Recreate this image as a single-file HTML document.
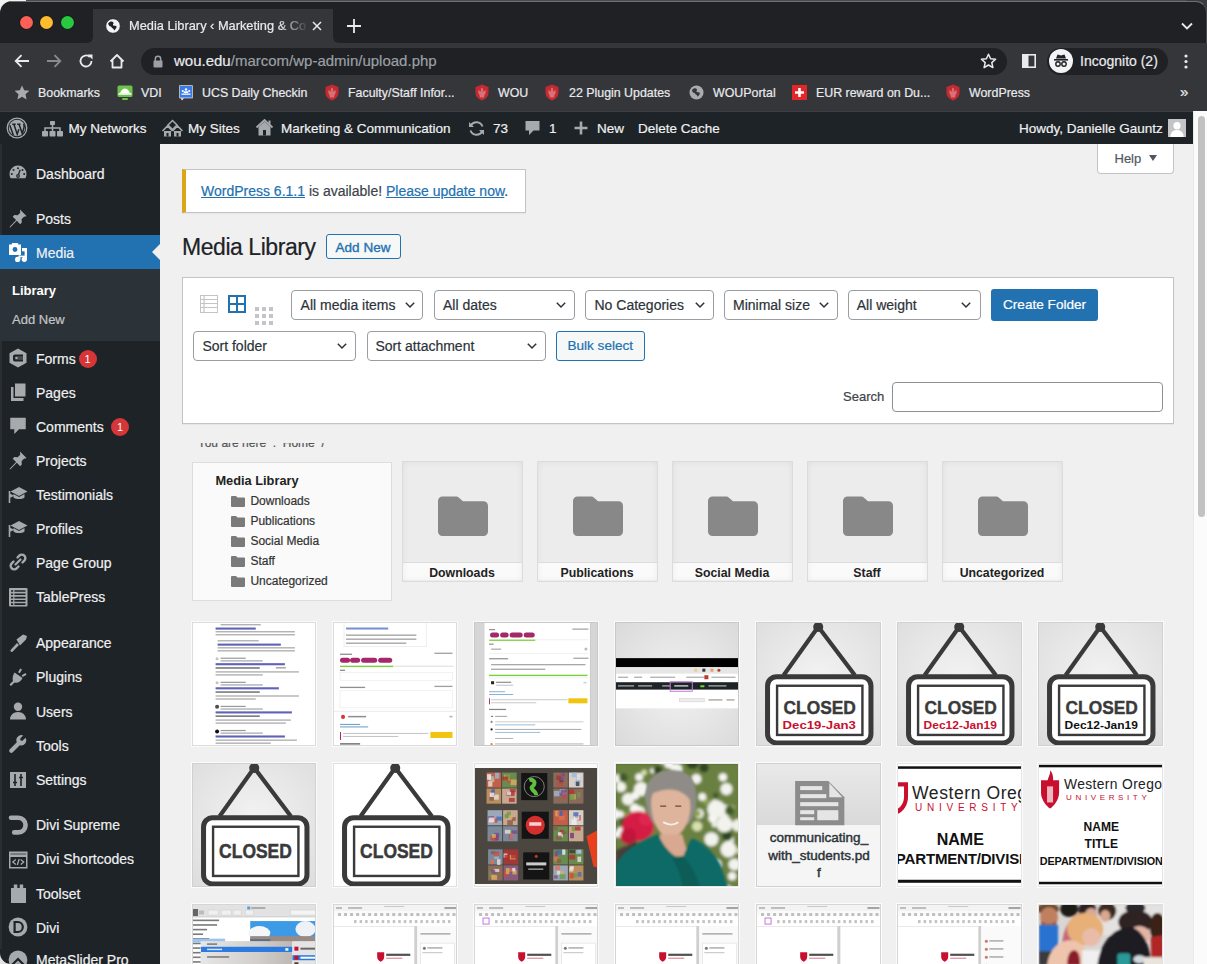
<!DOCTYPE html>
<html><head><meta charset="utf-8">
<style>
*{box-sizing:border-box;margin:0;padding:0}
html,body{width:1207px;height:964px;overflow:hidden;background:#f0f0f1;font-family:"Liberation Sans",sans-serif}
.a{position:absolute}
.t{position:absolute;white-space:nowrap;line-height:1;-webkit-text-stroke:.2px currentColor}
svg{position:absolute;overflow:visible}
#chrome{left:0;top:0;width:1207px;height:111px;background:#35363a}
#tabstrip{left:0;top:0;width:1207px;height:41px;background:#202124}
.tl{width:13px;height:13px;border-radius:50%;top:15.6px;box-shadow:0 0 0 .6px rgba(0,0,0,.35)}
#tab{left:93px;top:9px;width:240px;height:34px;background:#35363a;border-radius:9px 9px 0 0}
.w{color:#e8eaed}
.bm{font-size:12.4px;color:#e8eaed}
#adminbar{left:0;top:111px;width:1194px;height:33px;background:#1d2327;border-top:1px solid #3c3f44}
.ab{font-size:13.5px;color:#f0f0f1}
#sidebar{left:0;top:144px;width:160px;height:820px;background:#1d2327;border-bottom-left-radius:11px}
#submenu{left:0;top:269px;width:160px;height:72px;background:#2c3338}
#mediaact{left:0;top:235px;width:160px;height:34px;background:#2271b1}
.sm{font-size:14px;color:#f0f0f1}
.ic{fill:#a7aaad}
#content{left:160px;top:144px;width:1033px;height:820px;background:#f0f0f1}
#scroll{left:1193px;top:111px;width:14px;height:853px;background:#fbfbfb;border-left:1px solid #e8e8e8}
#thumb{left:1198px;top:116px;width:7px;height:401px;background:#c2c2c2;border-radius:4px}
.badge{position:absolute;width:18px;height:18px;border-radius:9px;background:#d63638;color:#fff;font-size:11px;line-height:18px;text-align:center}
.sel{height:30px;background:#fff;border:1px solid #9a9da1;border-radius:4px}
.card{position:absolute;border:1px solid #dcdcde;overflow:hidden;box-shadow:0 0 0 1px rgba(255,255,255,.7)}
.card svg{position:absolute}
.fcard{width:121px;height:120.5px;border:1px solid #dcdcde;background:linear-gradient(#fafafa,#fafafa) bottom/100% 17.5px no-repeat,#ececec;box-shadow:inset 0 0 6px rgba(0,0,0,.06)}
.fcard:after{content:"";position:absolute;left:0;right:0;bottom:17.5px;height:1px;background:#dcdcde}
</style></head><body>

<div class="a" id="chrome"></div>
<div class="a" style="left:0;top:0;width:93px;height:42.5px;background:#202124;border-bottom-right-radius:6px"></div>
<div class="a" style="left:333px;top:0;width:874px;height:42.5px;background:#202124;border-bottom-left-radius:6px"></div>
<div class="a" style="left:80px;top:0;width:260px;height:9px;background:#202124"></div>
<div class="a" style="left:0;top:0;width:30px;height:30px;background:#f2f2f2"></div>
<div class="a" style="left:0;top:1px;width:40px;height:41.5px;background:#202124;border-top-left-radius:12px"></div>
<div class="a" style="left:26px;top:0;width:1181px;height:1px;background:#4a4b4e"></div>
<div class="a" style="left:10px;top:1px;width:1187px;height:1px;background:#6f7073"></div>
<div class="a" style="left:1187px;top:0;width:20px;height:20px;background:#3a3b3e"></div>
<div class="a" style="left:1157px;top:1px;width:50px;height:41.5px;background:#202124;border-top:1px solid #6f7073;border-right:1px solid #4a4b4e;border-top-right-radius:11px"></div>
<div class="a tl" style="left:20.4px;background:#fe5f57"></div>
<div class="a tl" style="left:40.4px;background:#febc2e"></div>
<div class="a tl" style="left:60.6px;background:#28c840"></div>
<div class="a" id="tab"></div>
<!-- globe -->
<svg style="left:105px;top:18px" width="16" height="16" viewBox="0 0 16 16"><circle cx="8" cy="8" r="7.3" fill="#f1f3f4"/><path d="M3.2 5.5C4.5 3.5 7 3 8.2 4.2S7 6.8 8.5 7.5 11 7 11.5 8.5 10 11 9.5 12.5L8 10.5C6.5 10 6.8 8.8 5.5 8.5S3.5 7 3.2 5.5Z" fill="#202124"/><circle cx="8" cy="8" r="7.3" fill="none" stroke="#202124" stroke-width=".8"/></svg>
<div class="t w" style="left:129px;top:20.2px;font-size:12.8px;width:180px;overflow:hidden;-webkit-mask-image:linear-gradient(90deg,#000 150px,transparent 180px)">Media Library ‹ Marketing &amp; Co</div>
<svg style="left:312px;top:21px" width="10" height="10" viewBox="0 0 10 10"><path d="M1 1L9 9M9 1L1 9" stroke="#e8eaed" stroke-width="1.5"/></svg>
<svg style="left:347px;top:19px" width="14" height="14" viewBox="0 0 14 14"><path d="M7 0V14M0 7H14" stroke="#e8eaed" stroke-width="1.8"/></svg>
<svg style="left:1181px;top:22px" width="12" height="8" viewBox="0 0 12 8"><path d="M1 1.5L6 6.5L11 1.5" stroke="#e8eaed" stroke-width="1.8" fill="none"/></svg>
<!-- toolbar -->
<svg style="left:14px;top:54px" width="16" height="14" viewBox="0 0 16 14"><path d="M15 7H2M7.5 1.2L1.7 7L7.5 12.8" stroke="#e8eaed" stroke-width="1.8" fill="none"/></svg>
<svg style="left:46px;top:54px" width="16" height="14" viewBox="0 0 16 14"><path d="M1 7H14M8.5 1.2L14.3 7L8.5 12.8" stroke="#8a8b8e" stroke-width="1.8" fill="none"/></svg>
<svg style="left:78px;top:53px" width="16" height="16" viewBox="0 0 16 16"><path d="M13.5 8A5.5 5.5 0 1 1 11.8 4" stroke="#e8eaed" stroke-width="1.8" fill="none"/><path d="M9.5 1.5H14.5V6.5Z" fill="#e8eaed"/></svg>
<svg style="left:109px;top:53px" width="16" height="16" viewBox="0 0 16 16"><path d="M1.5 8.5L8 2L14.5 8.5M3.5 7V14.5H12.5V7" stroke="#e8eaed" stroke-width="1.8" fill="none" stroke-linejoin="round"/></svg>
<div class="a" style="left:141px;top:48px;width:866px;height:27px;border-radius:14px;background:#202124"></div>
<svg style="left:153px;top:55px" width="10" height="13" viewBox="0 0 10 13"><path d="M2.3 6V4a2.7 2.7 0 0 1 5.4 0v2" stroke="#9aa0a6" stroke-width="1.5" fill="none"/><rect x="0.5" y="5.5" width="9" height="7" rx="1" fill="#9aa0a6"/></svg>
<div class="t" style="left:174px;top:52.5px;font-size:15px;color:#e8eaed">wou.edu<span style="color:#9aa0a6">/marcom/wp-admin/upload.php</span></div>
<svg style="left:980px;top:53px" width="17" height="16" viewBox="0 0 17 16"><path d="M8.5 1.2L10.6 5.8L15.6 6.3L11.8 9.6L12.9 14.6L8.5 12L4.1 14.6L5.2 9.6L1.4 6.3L6.4 5.8Z" stroke="#e8eaed" stroke-width="1.5" fill="none" stroke-linejoin="round"/></svg>
<svg style="left:1022px;top:54px" width="14" height="14" viewBox="0 0 14 14"><rect x="0.8" y="0.8" width="12.4" height="12.4" stroke="#e8eaed" stroke-width="1.6" fill="none"/><rect x="1" y="1" width="5.5" height="12" fill="#e8eaed"/></svg>
<div class="a" style="left:1047px;top:48px;width:121px;height:27px;border-radius:14px;background:#202124"></div>
<div class="a" style="left:1049px;top:49px;width:24px;height:24px;border-radius:12px;background:#f1f3f4"></div>
<svg style="left:1053px;top:53px" width="16" height="16" viewBox="0 0 16 16"><path d="M3 5.5L4.5 1.5L8 2.5L11.5 1.5L13 5.5Z" fill="#202124"/><rect x="1" y="6" width="14" height="1.6" fill="#202124"/><circle cx="5" cy="11" r="2.2" stroke="#202124" stroke-width="1.4" fill="none"/><circle cx="11" cy="11" r="2.2" stroke="#202124" stroke-width="1.4" fill="none"/></svg>
<div class="t" style="left:1080px;top:54px;font-size:14px;color:#e8eaed">Incognito (2)</div>
<svg style="left:1184px;top:54px" width="4" height="15" viewBox="0 0 4 15"><circle cx="2" cy="2" r="1.6" fill="#e8eaed"/><circle cx="2" cy="7.5" r="1.6" fill="#e8eaed"/><circle cx="2" cy="13" r="1.6" fill="#e8eaed"/></svg>
<!-- bookmarks -->
<svg style="left:14px;top:85px" width="16" height="15" viewBox="0 0 16 15"><path d="M8 0.5L10.2 5.3L15.4 5.8L11.5 9.3L12.6 14.4L8 11.7L3.4 14.4L4.5 9.3L0.6 5.8L5.8 5.3Z" fill="#a8abaf"/></svg>
<div class="t bm" style="left:38px;top:87px">Bookmarks</div>
<svg style="left:117px;top:85px" width="16" height="16" viewBox="0 0 16 16"><rect x="0.5" y="0.5" width="15" height="11.5" rx="1.5" fill="#6cc24a"/><path d="M2 9.5L4.5 5.5C5.5 4.2 6.5 3.5 8 3.5S10.5 4.2 11.5 5.5L14 9.5Z" fill="#fff"/><rect x="1.5" y="8" width="13" height="1.8" fill="#e8f5e0"/><rect x="5" y="13" width="6" height="2" rx="1" fill="#6cc24a"/></svg>
<div class="t bm" style="left:141px;top:87px">VDI</div>
<svg style="left:179px;top:85px" width="14" height="16" viewBox="0 0 14 16"><rect x="0.3" y="0.3" width="13.4" height="13" fill="#e8eaed"/><rect x="1" y="1" width="12" height="11.6" fill="#3b7be8"/><path d="M1.5 13.3L3 15.5L5 13.3Z" fill="#e8eaed"/><circle cx="7" cy="4.5" r="1.3" fill="#fff"/><circle cx="3.8" cy="6" r="1.1" fill="#fff"/><circle cx="10.2" cy="6" r="1.1" fill="#fff"/><path d="M2.5 8.5H11.5V9.8H2.5Z" fill="#fff"/><path d="M5.2 6.2H8.8L9.5 8H4.5Z" fill="#fff"/></svg>
<div class="t bm" style="left:202px;top:87px">UCS Daily Checkin</div>
<svg style="left:325px;top:84px" width="14" height="17" viewBox="0 0 14 17"><path d="M7 0.5L13.5 3V9C13.5 12.5 10.5 15 7 16.5C3.5 15 0.5 12.5 0.5 9V3Z" fill="#c42a32"/><path d="M7 3.5C8.5 5 8.5 6.5 7.5 7.5C9 7.5 10 6.5 10 5.5C11 7 11 9.5 9.5 11L9 13.5H5L4.5 11C3 9.5 3 7 4 5.5C4 6.5 5 7.5 6.5 7.5C5.5 6.5 5.5 5 7 3.5Z" fill="#f0c8c8" opacity=".45"/></svg>
<div class="t bm" style="left:348px;top:87px">Faculty/Staff Infor...</div>
<svg style="left:475px;top:84px" width="14" height="17" viewBox="0 0 14 17"><path d="M7 0.5L13.5 3V9C13.5 12.5 10.5 15 7 16.5C3.5 15 0.5 12.5 0.5 9V3Z" fill="#c42a32"/><path d="M7 3.5C8.5 5 8.5 6.5 7.5 7.5C9 7.5 10 6.5 10 5.5C11 7 11 9.5 9.5 11L9 13.5H5L4.5 11C3 9.5 3 7 4 5.5C4 6.5 5 7.5 6.5 7.5C5.5 6.5 5.5 5 7 3.5Z" fill="#f0c8c8" opacity=".45"/></svg>
<div class="t bm" style="left:498px;top:87px">WOU</div>
<svg style="left:545px;top:84px" width="14" height="17" viewBox="0 0 14 17"><path d="M7 0.5L13.5 3V9C13.5 12.5 10.5 15 7 16.5C3.5 15 0.5 12.5 0.5 9V3Z" fill="#c42a32"/><path d="M7 3.5C8.5 5 8.5 6.5 7.5 7.5C9 7.5 10 6.5 10 5.5C11 7 11 9.5 9.5 11L9 13.5H5L4.5 11C3 9.5 3 7 4 5.5C4 6.5 5 7.5 6.5 7.5C5.5 6.5 5.5 5 7 3.5Z" fill="#f0c8c8" opacity=".45"/></svg>
<div class="t bm" style="left:569px;top:87px">22 Plugin Updates</div>
<svg style="left:689px;top:85px" width="15" height="15" viewBox="0 0 16 16"><circle cx="8" cy="8" r="7.5" fill="#a8abaf"/><path d="M3.2 5.5C4.5 3.5 7 3 8.2 4.2S7 6.8 8.5 7.5 11 7 11.5 8.5 10 11 9.5 12.5L8 10.5C6.5 10 6.8 8.8 5.5 8.5S3.5 7 3.2 5.5Z" fill="#35363a"/></svg>
<div class="t bm" style="left:713px;top:87px">WOUPortal</div>
<div class="a" style="left:792px;top:85px;width:15px;height:15px;background:#e3262a"></div>
<svg style="left:792px;top:85px" width="15" height="15" viewBox="0 0 15 15"><path d="M7.5 3V12M3 7.5H12" stroke="#fff" stroke-width="2.6"/></svg>
<div class="t bm" style="left:816px;top:87px">EUR reward on Du...</div>
<svg style="left:946px;top:84px" width="14" height="17" viewBox="0 0 14 17"><path d="M7 0.5L13.5 3V9C13.5 12.5 10.5 15 7 16.5C3.5 15 0.5 12.5 0.5 9V3Z" fill="#c42a32"/><path d="M7 3.5C8.5 5 8.5 6.5 7.5 7.5C9 7.5 10 6.5 10 5.5C11 7 11 9.5 9.5 11L9 13.5H5L4.5 11C3 9.5 3 7 4 5.5C4 6.5 5 7.5 6.5 7.5C5.5 6.5 5.5 5 7 3.5Z" fill="#f0c8c8" opacity=".45"/></svg>
<div class="t bm" style="left:969px;top:87px">WordPress</div>
<div class="t" style="left:1180px;top:84px;font-size:15px;color:#e8eaed">»</div>

<div class="a" id="adminbar"></div>
<svg style="left:6px;top:117px" width="22" height="22" viewBox="0 0 22 22"><circle cx="11" cy="11" r="9.8" fill="none" stroke="#a7aaad" stroke-width="1.3"/><circle cx="11" cy="11" r="8.2" fill="#a7aaad"/><path d="M3.8 8.2l3.6 10M6.2 7.2h3.5M11.2 7.2h3.3M7.9 7.2l3.3 10 1.7-5M13 7.2l3.3 9.3 1.6-5.5c.5-1.8.2-3.2-.4-4" stroke="#1d2327" stroke-width="1.5" fill="none"/></svg>
<svg style="left:42px;top:121px" width="21" height="16" viewBox="0 0 21 16"><rect x="8" y="0" width="5" height="4" rx=".8" fill="#a7aaad"/><path d="M10.5 4v3M3 10V7h15v3M10.5 7v3" stroke="#a7aaad" stroke-width="1.5" fill="none"/><rect x="0" y="10" width="6" height="5.5" rx=".8" fill="#a7aaad"/><rect x="7.5" y="10" width="6" height="5.5" rx=".8" fill="#a7aaad"/><rect x="15" y="10" width="6" height="5.5" rx=".8" fill="#a7aaad"/></svg>
<div class="t ab" style="left:68.5px;top:122px">My Networks</div>
<svg style="left:162px;top:120px" width="21" height="17" viewBox="0 0 21 17"><path d="M10.5 0.5L15 5 10.5 9.5 6 5z" fill="none" stroke="#a7aaad" stroke-width="1.5"/><path d="M0.5 11l5-5 5 5M10.5 11l5-5 5 5" stroke="#a7aaad" stroke-width="1.6" fill="none"/><path d="M2 11h7v5.5H2zM12 11h7v5.5h-7z" fill="#a7aaad"/><rect x="4.5" y="13" width="2" height="3.5" fill="#1d2327"/><rect x="14.5" y="13" width="2" height="3.5" fill="#1d2327"/></svg>
<div class="t ab" style="left:188px;top:122px">My Sites</div>
<svg style="left:256px;top:119px" width="17" height="17" viewBox="0 0 17 17"><path d="M0.5 8.5L8.5 1l8 7.5" stroke="#a7aaad" stroke-width="1.8" fill="none"/><path d="M2.5 8v8.5h12V8L8.5 2.5z" fill="#a7aaad"/><rect x="7" y="11" width="3" height="5.5" fill="#1d2327"/><rect x="12.5" y="1.5" width="2" height="4" fill="#a7aaad"/></svg>
<div class="t ab" style="left:281px;top:122px">Marketing &amp; Communication</div>
<svg style="left:468px;top:120px" width="17" height="17" viewBox="0 0 17 17"><path d="M14.5 6.5A6.5 6.5 0 0 0 2.8 5.5M2.5 10.5a6.5 6.5 0 0 0 11.7 1" stroke="#a7aaad" stroke-width="2" fill="none"/><path d="M1 2v5h5zM16 15v-5h-5z" fill="#a7aaad"/></svg>
<div class="t ab" style="left:493px;top:122px">73</div>
<svg style="left:525px;top:120px" width="15" height="16" viewBox="0 0 15 16"><path d="M0.5 1h14v9.5h-6L4 15v-4.5H0.5z" fill="#a7aaad"/></svg>
<div class="t ab" style="left:549px;top:122px">1</div>
<svg style="left:574px;top:121px" width="14" height="14" viewBox="0 0 14 14"><path d="M7 0.5v13M0.5 7h13" stroke="#a7aaad" stroke-width="2.6"/></svg>
<div class="t ab" style="left:597px;top:122px">New</div>
<div class="t ab" style="left:638px;top:122px">Delete Cache</div>
<div class="t ab" style="left:1019px;top:122px">Howdy, Danielle Gauntz</div>
<div class="a" style="left:1168px;top:118.5px;width:18px;height:18px;background:#c3c4c7;overflow:hidden"><svg style="left:0;top:0" width="18" height="18" viewBox="0 0 19 19"><circle cx="9.5" cy="7" r="3.8" fill="#fff"/><path d="M2.5 19c0-5 3-7.5 7-7.5s7 2.5 7 7.5z" fill="#fff"/></svg></div>

<div class="a" style="left:0;top:940px;width:20px;height:24px;background:#e4e4e4"></div>
<div class="a" id="sidebar"></div>
<div class="a" style="left:0;top:144px;width:1.5px;height:805px;background:#2a2e33"></div>
<div class="a" id="mediaact"></div>
<div class="a" id="submenu"></div>
<svg style="left:150px;top:244px" width="10" height="16" viewBox="0 0 10 16"><path d="M10 0V16L2 8Z" fill="#f0f0f1"/></svg>
<div class="t" style="left:12px;top:284px;font-size:13px;font-weight:700;color:#fff;-webkit-text-stroke:0">Library</div>
<div class="t" style="left:12px;top:312.5px;font-size:13px;color:#c3c4c7">Add New</div>
<div class="badge" style="left:78.5px;top:350px">1</div>
<div class="badge" style="left:111px;top:418px">1</div>

<svg style="left:8px;top:163px" width="20" height="20" viewBox="0 0 20 20"><path d="M10 2.5A8.5 8.5 0 0 0 1.5 11c0 1.6.4 3 1.1 4.3h14.8c.7-1.3 1.1-2.7 1.1-4.3A8.5 8.5 0 0 0 10 2.5z" fill="#a7aaad"/><circle cx="10" cy="5.2" r="1" fill="#1d2327"/><circle cx="5.5" cy="7" r="1" fill="#1d2327"/><circle cx="14.5" cy="7" r="1" fill="#1d2327"/><circle cx="3.8" cy="11" r="1" fill="#1d2327"/><circle cx="16.2" cy="11" r="1" fill="#1d2327"/><path d="M12.2 6.8L10.4 11.8" stroke="#1d2327" stroke-width="1.3"/><circle cx="10" cy="13" r="1.9" fill="#1d2327"/><circle cx="10" cy="13" r=".7" fill="#a7aaad"/></svg>
<div class="t sm" style="left:36px;top:166.7px">Dashboard</div>
<svg style="left:8px;top:208px" width="20" height="20" viewBox="0 0 20 20"><path d="M12 1.5l6.5 6.5-1.5.8-.8-.2-2.6 2.6.2 3.4-1.6 1.6-3.4-3.4L2.2 19.5 1.5 19l6.6-6.9-3.4-3.4L6.3 7.1l3.4.2 2.6-2.6-.2-.8z" fill="#a7aaad"/></svg>
<div class="t sm" style="left:36px;top:211.7px">Posts</div>
<svg style="left:8px;top:242px" width="20" height="20" viewBox="0 0 20 20"><path d="M1 2.5h2.5l.8-1.5h5.4l.8 1.5H13v10.5H1z" fill="#fff"/><circle cx="7" cy="7.5" r="2.4" fill="#2271b1"/><path d="M14 6h5v3.3h-5z" fill="#fff"/><rect x="16.6" y="6" width="2.4" height="11.5" fill="#fff"/><circle cx="16.3" cy="17.3" r="2.6" fill="#fff"/><rect x="10.6" y="13.6" width="1.8" height="4" fill="#fff"/><rect x="10.6" y="13.6" width="8.4" height="1.6" fill="#fff"/><circle cx="9.6" cy="17.4" r="2.6" fill="#fff"/></svg>
<div class="t sm" style="left:36px;top:245.7px">Media</div>
<svg style="left:8px;top:348px" width="20" height="20" viewBox="0 0 20 20"><path d="M10 0.5l8.5 4.8v9.4L10 19.5l-8.5-4.8V5.3z" fill="#a7aaad"/><path d="M5 8.3a1.8 1.8 0 0 1 1.8-1.8H15v2.2H7.3v2.6H15v2.2H6.8A1.8 1.8 0 0 1 5 11.7z" fill="#1d2327"/><rect x="9.5" y="9.3" width="5.5" height="1.4" fill="#1d2327"/></svg>
<div class="t sm" style="left:36px;top:351.6px">Forms</div>
<svg style="left:8px;top:382px" width="20" height="20" viewBox="0 0 20 20"><path d="M7 1.5h10.5v13H7z" fill="#a7aaad"/><path d="M3 5h2.5v11h10v3H3z" fill="#a7aaad"/></svg>
<div class="t sm" style="left:36px;top:385.6px">Pages</div>
<svg style="left:8px;top:416px" width="20" height="20" viewBox="0 0 20 20"><path d="M2.5 2h15v11h-6.5l-4.5 4.5V13H2.5z" fill="#a7aaad" stroke="#a7aaad" stroke-width=".5" stroke-linejoin="round"/></svg>
<div class="t sm" style="left:36px;top:419.6px">Comments</div>
<svg style="left:8px;top:450px" width="20" height="20" viewBox="0 0 20 20"><path d="M12 1.5l6.5 6.5-1.5.8-.8-.2-2.6 2.6.2 3.4-1.6 1.6-3.4-3.4L2.2 19.5 1.5 19l6.6-6.9-3.4-3.4L6.3 7.1l3.4.2 2.6-2.6-.2-.8z" fill="#a7aaad"/></svg>
<div class="t sm" style="left:36px;top:453.6px">Projects</div>
<svg style="left:8px;top:484px" width="20" height="20" viewBox="0 0 20 20"><path d="M11 3l8.5 4.5L11 12 2.5 7.5z" fill="#a7aaad"/><path d="M5.5 10v3.5c2.5 2 8.5 2 11 0V10L11 13z" fill="#a7aaad"/><path d="M1.5 7v12" stroke="#a7aaad" stroke-width="1.6"/><path d="M1.5 9.5l5 2.2-5 2.2z" fill="#a7aaad"/></svg>
<div class="t sm" style="left:36px;top:487.6px">Testimonials</div>
<svg style="left:8px;top:518px" width="20" height="20" viewBox="0 0 20 20"><path d="M11 3l8.5 4.5L11 12 2.5 7.5z" fill="#a7aaad"/><path d="M5.5 10v3.5c2.5 2 8.5 2 11 0V10L11 13z" fill="#a7aaad"/><path d="M1.5 7v12" stroke="#a7aaad" stroke-width="1.6"/><path d="M1.5 9.5l5 2.2-5 2.2z" fill="#a7aaad"/></svg>
<div class="t sm" style="left:36px;top:521.6px">Profiles</div>
<svg style="left:8px;top:552px" width="20" height="20" viewBox="0 0 20 20"><path d="M7.5 12.5l5-5" stroke="#a7aaad" stroke-width="2.2" stroke-linecap="round"/><path d="M9.5 5.5l1.8-1.8a3.5 3.5 0 0 1 5 5L14.5 10.5M10.5 14.5l-1.8 1.8a3.5 3.5 0 0 1-5-5L5.5 9.5" stroke="#a7aaad" stroke-width="2.4" fill="none" stroke-linecap="round"/></svg>
<div class="t sm" style="left:36px;top:555.6px">Page Group</div>
<svg style="left:8px;top:586.5px" width="20" height="20" viewBox="0 0 20 20"><rect x="1" y="1" width="18.5" height="18.5" rx="1" fill="#a7aaad"/><path d="M3 4h14.5M3 7.3h14.5M3 10.6h14.5M3 13.9h14.5M3 17.1h14.5" stroke="#1d2327" stroke-width="1.6"/><path d="M5.8 2.5v16" stroke="#a7aaad" stroke-width="1.2"/></svg>
<div class="t sm" style="left:36px;top:590.1px">TablePress</div>
<svg style="left:8px;top:632.5px" width="20" height="20" viewBox="0 0 20 20"><path d="M8.5 6.5L15 1.5l4 1.5-1 3.5-6 6z" fill="#a7aaad"/><path d="M9 10l2 2-6.5 6.8c-.9.9-2.8-.9-1.9-1.8z" fill="#a7aaad"/></svg>
<div class="t sm" style="left:36px;top:636.1px">Appearance</div>
<svg style="left:8px;top:666.5px" width="20" height="20" viewBox="0 0 20 20"><path d="M12.2 1.5l1.8 1-2.2 3.8-1.8-1zM17.5 6l1 1.8-3.8 2.2-1-1.8z" fill="#a7aaad"/><path d="M6.5 5.5l8 5.5c-1.5 3.5-5 5.5-8 4.5l-3.5 3.5-1.5-1.5 3.5-3.5c-1-3 .2-6.5 1.5-8.5z" fill="#a7aaad"/></svg>
<div class="t sm" style="left:36px;top:670.1px">Plugins</div>
<svg style="left:8px;top:701px" width="20" height="20" viewBox="0 0 20 20"><circle cx="10" cy="5.8" r="4.2" fill="#a7aaad"/><path d="M2 18.5c0-4.5 3.5-7.5 8-7.5s8 3 8 7.5z" fill="#a7aaad"/></svg>
<div class="t sm" style="left:36px;top:704.6px">Users</div>
<svg style="left:8px;top:735px" width="20" height="20" viewBox="0 0 20 20"><path d="M17.5 2.8l-3 3-2-.3-.3-2 3-3A5 5 0 0 0 8.8 7.2L1.8 14.2a2.1 2.1 0 0 0 3 3l7-7a5 5 0 0 0 5.7-7.4z" fill="#a7aaad"/></svg>
<div class="t sm" style="left:36px;top:738.6px">Tools</div>
<svg style="left:8px;top:769.5px" width="20" height="20" viewBox="0 0 20 20"><rect x="2" y="2" width="16" height="16" fill="#a7aaad"/><path d="M7 4v12M5 12.5h4M13 4v12M11 7.5h4" stroke="#1d2327" stroke-width="1.6"/></svg>
<div class="t sm" style="left:36px;top:773.1px">Settings</div>
<svg style="left:8px;top:814.5px" width="20" height="20" viewBox="0 0 20 20"><path d="M3 2.8H10.3a7.3 7.3 0 0 1 0 14.6H6.2" stroke="#a7aaad" stroke-width="4.6" fill="none" stroke-linecap="round"/></svg>
<div class="t sm" style="left:36px;top:818.1px">Divi Supreme</div>
<svg style="left:8px;top:848.5px" width="20" height="20" viewBox="0 0 20 20"><rect x="1" y="2.5" width="18.5" height="17" fill="#a7aaad"/><rect x="2.5" y="8" width="15.5" height="10" fill="#1d2327"/><path d="M7.8 10.5l-3 2.5 3 2.5M12.7 10.5l3 2.5-3 2.5M11.2 10l-1.9 6" stroke="#a7aaad" stroke-width="1.3" fill="none"/><path d="M2.5 5h15.5" stroke="#1d2327" stroke-width=".7"/></svg>
<div class="t sm" style="left:36px;top:852.1px">Divi Shortcodes</div>
<svg style="left:8px;top:883px" width="20" height="20" viewBox="0 0 20 20"><path d="M3 5h2.8V1.5h3.5V5h2.4V1.5h3.5V5H18v15H3z" fill="#a7aaad"/></svg>
<div class="t sm" style="left:36px;top:886.6px">Toolset</div>
<svg style="left:8px;top:917px" width="20" height="20" viewBox="0 0 20 20"><circle cx="10" cy="10" r="9.4" fill="#a7aaad"/><path d="M6.6 5h3.2a5 5 0 0 1 0 10H6.6z" fill="none" stroke="#1d2327" stroke-width="2.2"/></svg>
<div class="t sm" style="left:36px;top:920.6px">Divi</div>
<svg style="left:8px;top:949.5px" width="20" height="20" viewBox="0 0 20 20"><circle cx="10" cy="10" r="9.4" fill="#a7aaad"/><path d="M3.5 15.5L10 9l6.5 6.5M6 19l4-4 4 4" stroke="#1d2327" stroke-width="2.2" fill="none"/></svg>
<div class="t sm" style="left:36px;top:953.1px">MetaSlider Pro</div>
<div class="a" id="content"></div>
<!-- help tab -->
<div class="a" style="left:1097px;top:144px;width:77px;height:30px;background:#fff;border:1px solid #c3c4c7;border-top:none;border-radius:0 0 4px 4px"></div>
<div class="t" style="left:1114.5px;top:152.2px;font-size:13px;color:#50575e">Help</div>
<svg style="left:1149px;top:155px" width="8" height="6" viewBox="0 0 8 6"><path d="M0 0H8L4 6Z" fill="#50575e"/></svg>
<!-- notice -->
<div class="a" style="left:182px;top:169px;width:344px;height:44px;background:#fff;border:1px solid #c3c4c7;border-left:4px solid #dba617;box-shadow:0 1px 1px rgba(0,0,0,.04)"></div>
<div class="t" style="left:201px;top:184.2px;font-size:14px;color:#3c434a"><span style="color:#2271b1;text-decoration:underline">WordPress 6.1.1</span> is available! <span style="color:#2271b1;text-decoration:underline">Please update now</span>.</div>
<!-- heading -->
<div class="t" style="left:182px;top:235.5px;font-size:23px;letter-spacing:-0.45px;color:#1d2327">Media Library</div>
<div class="a" style="left:326px;top:234px;width:75px;height:25px;border:1px solid #2271b1;border-radius:3px;background:#f6f7f7"></div>
<div class="t" style="left:335.5px;top:241px;font-size:13.5px;letter-spacing:.05px;color:#2271b1;-webkit-text-stroke:.35px #2271b1">Add New</div>
<!-- filter box -->
<div class="a" style="left:182px;top:277px;width:992px;height:147px;background:#fff;border:1px solid #c3c4c7;box-shadow:0 1px 1px rgba(0,0,0,.04)"></div>
<svg style="left:200px;top:295px" width="18" height="18" viewBox="0 0 18 18"><rect x="0.5" y="0.5" width="17" height="17" fill="none" stroke="#c3c4c7" stroke-width="1"/><path d="M0.5 4.5h17M0.5 8.5h17M0.5 12.5h17M4 0.5v17" stroke="#c3c4c7" stroke-width="1.2"/></svg>
<svg style="left:228px;top:295px" width="18" height="18" viewBox="0 0 18 18"><rect x="1" y="1" width="16" height="16" fill="none" stroke="#2271b1" stroke-width="2"/><path d="M9 1v16M1 9h16" stroke="#2271b1" stroke-width="2"/></svg>
<svg style="left:255px;top:307px" width="18" height="18" viewBox="0 0 18 18"><g fill="#c3c4c7"><rect x="0" y="0" width="4" height="4"/><rect x="7" y="0" width="4" height="4"/><rect x="14" y="0" width="4" height="4"/><rect x="0" y="7" width="4" height="4"/><rect x="7" y="7" width="4" height="4"/><rect x="14" y="7" width="4" height="4"/><rect x="0" y="14" width="4" height="4"/><rect x="7" y="14" width="4" height="4"/><rect x="14" y="14" width="4" height="4"/></g></svg>

<div class="a sel" style="left:291px;top:289.5px;width:132.0px"></div>
<div class="t" style="left:300.6px;top:297.8px;font-size:14px;color:#2c3338">All media items</div>
<svg style="left:405px;top:302.0px" width="10" height="6" viewBox="0 0 10 6"><path d="M0.8 0.8L5 5L9.2 0.8" stroke="#2c3338" stroke-width="1.5" fill="none"/></svg>
<div class="a sel" style="left:433.5px;top:289.5px;width:141.0px"></div>
<div class="t" style="left:443px;top:297.8px;font-size:14px;color:#2c3338">All dates</div>
<svg style="left:556px;top:302.0px" width="10" height="6" viewBox="0 0 10 6"><path d="M0.8 0.8L5 5L9.2 0.8" stroke="#2c3338" stroke-width="1.5" fill="none"/></svg>
<div class="a sel" style="left:585px;top:289.5px;width:129.0px"></div>
<div class="t" style="left:594.5px;top:297.8px;font-size:14px;color:#2c3338">No Categories</div>
<svg style="left:695.4px;top:302.0px" width="10" height="6" viewBox="0 0 10 6"><path d="M0.8 0.8L5 5L9.2 0.8" stroke="#2c3338" stroke-width="1.5" fill="none"/></svg>
<div class="a sel" style="left:724px;top:289.5px;width:113.5px"></div>
<div class="t" style="left:733px;top:297.8px;font-size:14px;color:#2c3338">Minimal size</div>
<svg style="left:819px;top:302.0px" width="10" height="6" viewBox="0 0 10 6"><path d="M0.8 0.8L5 5L9.2 0.8" stroke="#2c3338" stroke-width="1.5" fill="none"/></svg>
<div class="a sel" style="left:848px;top:289.5px;width:132.5px"></div>
<div class="t" style="left:856.7px;top:297.8px;font-size:14px;color:#2c3338">All weight</div>
<svg style="left:961px;top:302.0px" width="10" height="6" viewBox="0 0 10 6"><path d="M0.8 0.8L5 5L9.2 0.8" stroke="#2c3338" stroke-width="1.5" fill="none"/></svg>
<div class="a sel" style="left:193px;top:330.5px;width:163.0px"></div>
<div class="t" style="left:202.4px;top:338.8px;font-size:14px;color:#2c3338">Sort folder</div>
<svg style="left:337px;top:343.0px" width="10" height="6" viewBox="0 0 10 6"><path d="M0.8 0.8L5 5L9.2 0.8" stroke="#2c3338" stroke-width="1.5" fill="none"/></svg>
<div class="a sel" style="left:366.5px;top:330.5px;width:179.5px"></div>
<div class="t" style="left:375.5px;top:338.8px;font-size:14px;color:#2c3338">Sort attachment</div>
<svg style="left:527px;top:343.0px" width="10" height="6" viewBox="0 0 10 6"><path d="M0.8 0.8L5 5L9.2 0.8" stroke="#2c3338" stroke-width="1.5" fill="none"/></svg>
<div class="a" style="left:991px;top:288.5px;width:107px;height:32px;background:#2271b1;border-radius:3px"></div>
<div class="t" style="left:1003px;top:297.5px;font-size:13.6px;color:#fff">Create Folder</div>
<div class="a" style="left:556px;top:330.5px;width:88.5px;height:30px;background:#f6f7f7;border:1px solid #2271b1;border-radius:3px"></div>
<div class="t" style="left:567.4px;top:339px;font-size:13.6px;color:#2271b1">Bulk select</div>
<div class="t" style="left:843px;top:390.3px;font-size:13px;color:#3c434a">Search</div>
<div class="a" style="left:891.5px;top:381.5px;width:271.5px;height:30px;background:#fff;border:1px solid #8c8f94;border-radius:4px"></div>

<div class="a" style="left:195px;top:442.5px;width:200px;height:4.6px;overflow:hidden"><div class="t" style="left:2.8px;top:-6px;font-size:12px;color:#555">You are here&nbsp;&nbsp;:&nbsp;&nbsp;Home&nbsp;&nbsp;/</div></div>
<div class="a" style="left:192px;top:461.5px;width:200px;height:139.5px;background:#fafafa;border:1.5px solid #ddd"></div>
<div class="t" style="left:215.4px;top:474.7px;font-size:12.8px;font-weight:700;color:#222;-webkit-text-stroke:0">Media Library</div>
<svg style="left:230.5px;top:496.3px" width="14" height="11" viewBox="0 0 14 11"><path d="M0 1a1 1 0 0 1 1-1h4l1.5 1.5H13a1 1 0 0 1 1 1V10a1 1 0 0 1-1 1H1a1 1 0 0 1-1-1z" fill="#7a7a7a"/></svg>
<div class="t" style="left:250.4px;top:495.1px;font-size:12px;color:#333">Downloads</div>
<svg style="left:230.5px;top:516.3px" width="14" height="11" viewBox="0 0 14 11"><path d="M0 1a1 1 0 0 1 1-1h4l1.5 1.5H13a1 1 0 0 1 1 1V10a1 1 0 0 1-1 1H1a1 1 0 0 1-1-1z" fill="#7a7a7a"/></svg>
<div class="t" style="left:250.4px;top:515.1px;font-size:12px;color:#333">Publications</div>
<svg style="left:230.5px;top:536.3px" width="14" height="11" viewBox="0 0 14 11"><path d="M0 1a1 1 0 0 1 1-1h4l1.5 1.5H13a1 1 0 0 1 1 1V10a1 1 0 0 1-1 1H1a1 1 0 0 1-1-1z" fill="#7a7a7a"/></svg>
<div class="t" style="left:250.4px;top:535.1px;font-size:12px;color:#333">Social Media</div>
<svg style="left:230.5px;top:556.3px" width="14" height="11" viewBox="0 0 14 11"><path d="M0 1a1 1 0 0 1 1-1h4l1.5 1.5H13a1 1 0 0 1 1 1V10a1 1 0 0 1-1 1H1a1 1 0 0 1-1-1z" fill="#7a7a7a"/></svg>
<div class="t" style="left:250.4px;top:555.1px;font-size:12px;color:#333">Staff</div>
<svg style="left:230.5px;top:576.3px" width="14" height="11" viewBox="0 0 14 11"><path d="M0 1a1 1 0 0 1 1-1h4l1.5 1.5H13a1 1 0 0 1 1 1V10a1 1 0 0 1-1 1H1a1 1 0 0 1-1-1z" fill="#7a7a7a"/></svg>
<div class="t" style="left:250.4px;top:575.1px;font-size:12px;color:#333">Uncategorized</div>
<div class="a fcard" style="left:402px;top:461px"></div>
<svg style="left:437.5px;top:496px" width="50" height="40" viewBox="0 0 50 40"><path d="M0 5a4.5 4.5 0 0 1 4.5-4.5H18.5a3 3 0 0 1 2.2 1L25 5.3H45.5A4.5 4.5 0 0 1 50 9.8V35.5A4.5 4.5 0 0 1 45.5 40H4.5A4.5 4.5 0 0 1 0 35.5z" fill="#888"/></svg>
<div class="t" style="left:402px;width:120px;text-align:center;top:567px;font-size:12.3px;font-weight:700;color:#222;-webkit-text-stroke:0">Downloads</div>
<div class="a fcard" style="left:537px;top:461px"></div>
<svg style="left:572.5px;top:496px" width="50" height="40" viewBox="0 0 50 40"><path d="M0 5a4.5 4.5 0 0 1 4.5-4.5H18.5a3 3 0 0 1 2.2 1L25 5.3H45.5A4.5 4.5 0 0 1 50 9.8V35.5A4.5 4.5 0 0 1 45.5 40H4.5A4.5 4.5 0 0 1 0 35.5z" fill="#888"/></svg>
<div class="t" style="left:537px;width:120px;text-align:center;top:567px;font-size:12.3px;font-weight:700;color:#222;-webkit-text-stroke:0">Publications</div>
<div class="a fcard" style="left:672px;top:461px"></div>
<svg style="left:707.5px;top:496px" width="50" height="40" viewBox="0 0 50 40"><path d="M0 5a4.5 4.5 0 0 1 4.5-4.5H18.5a3 3 0 0 1 2.2 1L25 5.3H45.5A4.5 4.5 0 0 1 50 9.8V35.5A4.5 4.5 0 0 1 45.5 40H4.5A4.5 4.5 0 0 1 0 35.5z" fill="#888"/></svg>
<div class="t" style="left:672px;width:120px;text-align:center;top:567px;font-size:12.3px;font-weight:700;color:#222;-webkit-text-stroke:0">Social Media</div>
<div class="a fcard" style="left:807px;top:461px"></div>
<svg style="left:842.5px;top:496px" width="50" height="40" viewBox="0 0 50 40"><path d="M0 5a4.5 4.5 0 0 1 4.5-4.5H18.5a3 3 0 0 1 2.2 1L25 5.3H45.5A4.5 4.5 0 0 1 50 9.8V35.5A4.5 4.5 0 0 1 45.5 40H4.5A4.5 4.5 0 0 1 0 35.5z" fill="#888"/></svg>
<div class="t" style="left:807px;width:120px;text-align:center;top:567px;font-size:12.3px;font-weight:700;color:#222;-webkit-text-stroke:0">Staff</div>
<div class="a fcard" style="left:942px;top:461px"></div>
<svg style="left:977.5px;top:496px" width="50" height="40" viewBox="0 0 50 40"><path d="M0 5a4.5 4.5 0 0 1 4.5-4.5H18.5a3 3 0 0 1 2.2 1L25 5.3H45.5A4.5 4.5 0 0 1 50 9.8V35.5A4.5 4.5 0 0 1 45.5 40H4.5A4.5 4.5 0 0 1 0 35.5z" fill="#888"/></svg>
<div class="t" style="left:942px;width:120px;text-align:center;top:567px;font-size:12.3px;font-weight:700;color:#222;-webkit-text-stroke:0">Uncategorized</div>
<div class="a card" style="left:191.6px;top:621.5px;width:124.5px;height:124.5px;background:#fff;border-color:#dcdcde;"><svg style="left:0;top:0" width="124.5" height="124.5" viewBox="0 0 124 124"><rect x="27.5" y="1.0" width="40.0" height="1.4" fill="#666" opacity="0.5"/><rect x="22.5" y="4.5" width="40.0" height="2.1" fill="#2a2fa0" opacity="0.75"/><rect x="22.5" y="8.0" width="79.0" height="1.4" fill="#666" opacity="0.5"/><rect x="22.5" y="11.0" width="79.0" height="1.4" fill="#666" opacity="0.5"/><rect x="24.5" y="17.0" width="41.0" height="1.4" fill="#666" opacity="0.5"/><rect x="24.5" y="20.5" width="63.0" height="2.1" fill="#2a2fa0" opacity="0.75"/><rect x="24.5" y="24.0" width="77.0" height="1.4" fill="#666" opacity="0.5"/><rect x="24.5" y="27.0" width="77.0" height="1.4" fill="#666" opacity="0.5"/><rect x="27.5" y="34.5" width="25.0" height="1.2" fill="#333" opacity="0.5"/><rect x="27.5" y="37.0" width="42.0" height="1.4" fill="#666" opacity="0.5"/><rect x="22.5" y="40.0" width="69.0" height="2.1" fill="#2a2fa0" opacity="0.75"/><rect x="22.5" y="44.0" width="44.0" height="1.6" fill="#333" opacity="0.65"/><rect x="82.5" y="44.0" width="10.0" height="1.3" fill="#333" opacity="0.5"/><rect x="22.5" y="48.0" width="83.0" height="1.4" fill="#666" opacity="0.5"/><rect x="22.5" y="51.0" width="47.0" height="1.4" fill="#666" opacity="0.5"/><rect x="27.5" y="58.5" width="25.0" height="1.2" fill="#333" opacity="0.5"/><rect x="27.5" y="61.0" width="42.0" height="1.4" fill="#666" opacity="0.5"/><rect x="22.5" y="64.0" width="63.0" height="2.1" fill="#2a2fa0" opacity="0.75"/><rect x="22.5" y="68.0" width="44.0" height="1.6" fill="#333" opacity="0.65"/><rect x="22.5" y="72.0" width="83.0" height="1.4" fill="#666" opacity="0.5"/><rect x="22.5" y="75.0" width="40.0" height="1.4" fill="#666" opacity="0.5"/><rect x="27.5" y="82.5" width="25.0" height="1.2" fill="#333" opacity="0.5"/><rect x="27.5" y="85.0" width="42.0" height="1.4" fill="#666" opacity="0.5"/><rect x="22.5" y="88.0" width="76.0" height="2.1" fill="#2a2fa0" opacity="0.75"/><rect x="22.5" y="92.0" width="44.0" height="1.6" fill="#333" opacity="0.65"/><rect x="22.5" y="96.0" width="75.0" height="1.4" fill="#666" opacity="0.5"/><rect x="22.5" y="99.0" width="70.0" height="1.4" fill="#666" opacity="0.5"/><rect x="27.5" y="106.5" width="25.0" height="1.2" fill="#333" opacity="0.5"/><rect x="27.5" y="109.0" width="42.0" height="1.4" fill="#666" opacity="0.5"/><rect x="22.5" y="112.0" width="69.0" height="2.1" fill="#2a2fa0" opacity="0.75"/><rect x="22.5" y="116.0" width="81.0" height="1.4" fill="#666" opacity="0.5"/><rect x="22.5" y="119.0" width="55.0" height="1.4" fill="#666" opacity="0.5"/><circle cx="24" cy="35.5" r="1.5" fill="#888" opacity=".5"/><circle cx="24" cy="59.5" r="1.5" fill="#888" opacity=".5"/><circle cx="24" cy="83.5" r="2" fill="#222" opacity=".8"/><circle cx="24" cy="108" r="2" fill="#111"/></svg></div>
<div class="a card" style="left:332.7px;top:621.5px;width:124.5px;height:124.5px;background:#fff;border-color:#dcdcde;"><svg style="left:0;top:0" width="124.5" height="124.5" viewBox="0 0 124 124"><g transform="translate(0,-3.5)"><rect x="10" y="2" width="82" height="25" fill="#fff" stroke="#eee"/><rect x="12" y="8" width="42" height="2" fill="#3b5fc0" opacity=".7"/><rect x="12" y="15" width="70" height="1.2" fill="#444" opacity=".55"/><rect x="12" y="19" width="70" height="1.2" fill="#444" opacity=".55"/><rect x="12" y="23" width="60" height="1.2" fill="#444" opacity=".55"/><rect x="6" y="34" width="12" height="1.3" fill="#444" opacity=".6"/><rect x="100" y="33" width="18" height="1.3" fill="#444" opacity=".5"/><rect x="6" y="38" width="10" height="5" rx="2.5" fill="#a4286a"/><rect x="16" y="38" width="10" height="5" rx="2.5" fill="#a4286a"/><rect x="27" y="38" width="16" height="5" rx="2.5" fill="#a4286a"/><rect x="44" y="38" width="14" height="5" rx="2.5" fill="#a4286a"/><rect x="6" y="46" width="53" height="1.4" fill="#7ad03a"/><rect x="59" y="46" width="60" height="1" fill="#ddd"/><rect x="6" y="50" width="5" height="1.3" fill="#444" opacity=".6"/><rect x="6" y="53" width="112" height="8" fill="#fff" stroke="#e5e5e5" stroke-width=".5"/><rect x="6" y="67" width="25" height="1.3" fill="#444" opacity=".6"/><rect x="100" y="66" width="18" height="1.3" fill="#444" opacity=".5"/><rect x="6" y="71" width="112" height="17" fill="#fff" stroke="#e5e5e5" stroke-width=".5"/><rect x="0" y="91" width="124" height=".8" fill="#e5e5e5"/><circle cx="9" cy="97" r="2" fill="#dc3232"/><rect x="14" y="96" width="18" height="1.5" fill="#444" opacity=".6"/><rect x="115" y="96" width="3" height="1.5" fill="#666" opacity=".5"/><rect x="6" y="104" width="20" height="1" fill="#2271b1" opacity=".7"/><rect x="6" y="106.5" width="28" height="1" fill="#2271b1" opacity=".7"/><rect x="6" y="112" width="1" height="8" fill="#a4286a"/><rect x="9" y="113" width="85" height="1" fill="#888" opacity=".5"/><rect x="9" y="116" width="55" height="1" fill="#888" opacity=".5"/><rect x="96" y="112" width="22" height="6" fill="#f1c40f"/><rect x="6" y="123" width="20" height="1.3" fill="#333" opacity=".6"/><rect x="6" y="124.5" width="20" height="1.3" fill="#333" opacity=".6"/></g></svg></div>
<div class="a card" style="left:473.8px;top:621.5px;width:124.5px;height:124.5px;background:#fff;border-color:#c8c8c8;"><svg style="left:0;top:0" width="124.5" height="124.5" viewBox="0 0 124 124"><rect x="0" y="0" width="8.5" height="124" fill="#d6d6d6"/><rect x="8.5" y="0" width=".8" height="124" fill="#bdbdbd"/><rect x="115" y="0" width="9" height="124" fill="#d6d6d6"/><rect x="114.5" y="0" width=".8" height="124" fill="#c4c4c4"/><rect x="14" y="6" width="6" height="1.2" fill="#444" opacity=".6"/><rect x="97" y="5.5" width="16" height="1.2" fill="#444" opacity=".5"/><rect x="15" y="9.5" width="9" height="5" rx="2.5" fill="#a4286a"/><rect x="25" y="9.5" width="8.5" height="5" rx="2.5" fill="#a4286a"/><rect x="34.5" y="9.5" width="13" height="5" rx="2.5" fill="#a4286a"/><rect x="48.5" y="9.5" width="11" height="5" rx="2.5" fill="#a4286a"/><rect x="14" y="16.5" width="46" height="1.3" fill="#7ad03a"/><rect x="60" y="16.5" width="53" height=".6" fill="#e5e5e5"/><rect x="14" y="20.5" width="4.5" height="1.2" fill="#444" opacity=".6"/><rect x="16" y="25.5" width="10" height="1.1" fill="#444" opacity=".5"/><rect x="109" y="24.5" width="3" height="3" rx="1.5" fill="#bbb"/><rect x="14" y="30" width="99" height=".5" fill="#e5e5e5"/><rect x="14" y="35" width="19" height="1.2" fill="#444" opacity=".6"/><rect x="98" y="34.5" width="15" height="1.2" fill="#444" opacity=".5"/><rect x="16" y="41" width="94" height="1.1" fill="#444" opacity=".55"/><rect x="16" y="45.5" width="54" height="1.1" fill="#444" opacity=".55"/><rect x="14" y="51.5" width="98" height="1.4" fill="#7ad03a"/><rect x="14" y="54.5" width="99" height=".5" fill="#e5e5e5"/><rect x="16" y="58" width="3" height="3" fill="#222"/><rect x="21" y="58.5" width="15" height="1.1" fill="#333" opacity=".6"/><rect x="21" y="61.5" width="17" height=".9" fill="#777" opacity=".5"/><rect x="108" y="59" width="3" height="1" fill="#777" opacity=".5"/><rect x="14" y="68" width="16" height=".9" fill="#2271b1" opacity=".6"/><rect x="14" y="70.8" width="24" height=".9" fill="#2271b1" opacity=".6"/><rect x="14" y="75" width=".9" height="6" fill="#a4286a"/><rect x="16" y="76" width="76" height=".9" fill="#888" opacity=".5"/><rect x="16" y="79" width="45" height=".9" fill="#888" opacity=".5"/><rect x="93" y="75" width="19" height="5" fill="#f1c40f"/><rect x="14" y="85.5" width="17" height="1.2" fill="#333" opacity=".6"/><rect x="16" y="92.5" width="2" height="1" fill="#666"/><rect x="20" y="92.5" width="12" height="1.1" fill="#555" opacity=".5"/><circle cx="16.5" cy="98.5" r="1.1" fill="#888"/><rect x="20" y="98" width="88" height=".9" fill="#888" opacity=".45"/><rect x="20" y="101" width="40" height=".9" fill="#2271b1" opacity=".5"/><circle cx="16.5" cy="106" r="1.1" fill="#222"/><rect x="20" y="105.5" width="86" height=".9" fill="#444" opacity=".5"/><rect x="20" y="108.5" width="45" height=".9" fill="#2271b1" opacity=".5"/><rect x="20" y="114.5" width="18" height=".9" fill="#555" opacity=".5"/><circle cx="16.5" cy="120.5" r="1.1" fill="#e67e22"/><rect x="20" y="120" width="88" height=".9" fill="#555" opacity=".5"/></svg></div>
<div class="a card" style="left:614.9px;top:621.5px;width:124.5px;height:124.5px;background:#fff;border-color:#c8c8c8;"><svg style="left:0;top:0" width="124.5" height="124.5" viewBox="0 0 124 124"><defs><linearGradient id="gg" x1="0" y1="0" x2="0" y2="1"><stop offset="0" stop-color="#f0f0f0"/><stop offset="1" stop-color="#e2e2e2"/></linearGradient><radialGradient id="rg" cx=".5" cy=".5" r=".7"><stop offset="0" stop-color="#f2f2f2"/><stop offset="1" stop-color="#dadada"/></radialGradient></defs><rect x="0" y="0" width="124" height="124" fill="url(#rg)"/><rect x="0" y="35" width="124" height="9" fill="#000"/><rect x="0" y="44" width="124" height="6.5" fill="#e6e6e6"/><rect x="0" y="50.5" width="124" height="8.5" fill="#fff"/><rect x="0" y="59" width="124" height="7.5" fill="#1d2327"/><rect x="0" y="66.5" width="124" height="18.5" fill="#fff"/><rect x="78" y="45.5" width="3" height="3" fill="#e8d08a"/><rect x="86" y="45.5" width="3" height="3" fill="#333"/><rect x="94" y="45.5" width="3" height="3" fill="#e0a070"/><rect x="101" y="45.5" width="3" height="3" fill="#c0392b" rx="1.5"/><rect x="2" y="53.5" width="10" height="1" fill="#555" opacity=".6"/><rect x="18" y="53.5" width="8" height="1" fill="#555" opacity=".6"/><rect x="34" y="53.5" width="25" height="1" fill="#555" opacity=".6"/><rect x="70" y="53.5" width="18" height="1" fill="#555" opacity=".6"/><rect x="88" y="52" width="4" height="4" fill="#c0392b"/><rect x="95" y="53.5" width="24" height="1" fill="#555" opacity=".6"/><rect x="2" y="62" width="16" height="1.3" fill="#aaa"/><rect x="22" y="62" width="14" height="1.3" fill="#aaa"/><rect x="46" y="62" width="8" height="1.3" fill="#aaa"/><rect x="54" y="58.5" width="22" height="9.5" fill="none" stroke="#c678dd" stroke-width="1"/><rect x="58" y="62" width="14" height="1.3" fill="#ddd"/><rect x="84" y="62" width="4" height="2" fill="#7ad03a"/><rect x="92" y="62" width="18" height="1.3" fill="#aaa"/><rect x="63" y="75" width="25" height="3.5" fill="#eee" stroke="#ccc" stroke-width=".5"/><rect x="92" y="76" width="14" height="1.2" fill="#555" opacity=".6"/><rect x="110" y="76" width="8" height="1.2" fill="#555" opacity=".6"/></svg></div>
<div class="a card" style="left:756.0px;top:621.5px;width:124.5px;height:124.5px;background:#fff;border-color:#d0d0d0;"><svg style="left:0;top:0" width="124.5" height="124.5" viewBox="0 0 124 124"><defs><radialGradient id="cg" cx=".5" cy=".45" r=".75"><stop offset="0" stop-color="#f3f3f3"/><stop offset="1" stop-color="#dcdcdc"/></radialGradient></defs><rect width="124" height="124" fill="url(#cg)"/><path d="M26.5 52L61 3.8L97.5 52" stroke="#3a3a3a" stroke-width="4.2" fill="none" stroke-linejoin="round"/><circle cx="61" cy="4" r="5" fill="#3a3a3a"/><rect x="10.5" y="53.5" width="103" height="66" rx="9" fill="#fff" stroke="#3a3a3a" stroke-width="5"/><rect x="20" y="62.5" width="85" height="49" fill="none" stroke="#3a3a3a" stroke-width="2.4"/><text x="26.5" y="90.3" font-family="Liberation Sans" font-weight="700" font-size="17.6" fill="#3a3a3a" stroke="#3a3a3a" stroke-width=".4" textLength="72" lengthAdjust="spacingAndGlyphs">CLOSED</text><text x="25.5" y="106" font-family="Liberation Sans" font-weight="700" font-size="11.8" fill="#c8102e" textLength="73" lengthAdjust="spacingAndGlyphs">Dec19-Jan3</text></svg></div>
<div class="a card" style="left:897.1px;top:621.5px;width:124.5px;height:124.5px;background:#fff;border-color:#d0d0d0;"><svg style="left:0;top:0" width="124.5" height="124.5" viewBox="0 0 124 124"><defs><radialGradient id="cg" cx=".5" cy=".45" r=".75"><stop offset="0" stop-color="#f3f3f3"/><stop offset="1" stop-color="#dcdcdc"/></radialGradient></defs><rect width="124" height="124" fill="url(#cg)"/><path d="M26.5 52L61 3.8L97.5 52" stroke="#3a3a3a" stroke-width="4.2" fill="none" stroke-linejoin="round"/><circle cx="61" cy="4" r="5" fill="#3a3a3a"/><rect x="10.5" y="53.5" width="103" height="66" rx="9" fill="#fff" stroke="#3a3a3a" stroke-width="5"/><rect x="20" y="62.5" width="85" height="49" fill="none" stroke="#3a3a3a" stroke-width="2.4"/><text x="26.5" y="90.3" font-family="Liberation Sans" font-weight="700" font-size="17.6" fill="#3a3a3a" stroke="#3a3a3a" stroke-width=".4" textLength="72" lengthAdjust="spacingAndGlyphs">CLOSED</text><text x="25.5" y="106" font-family="Liberation Sans" font-weight="700" font-size="11.8" fill="#c8102e" textLength="73" lengthAdjust="spacingAndGlyphs">Dec12-Jan19</text></svg></div>
<div class="a card" style="left:1038.2px;top:621.5px;width:124.5px;height:124.5px;background:#fff;border-color:#d0d0d0;"><svg style="left:0;top:0" width="124.5" height="124.5" viewBox="0 0 124 124"><defs><radialGradient id="cg" cx=".5" cy=".45" r=".75"><stop offset="0" stop-color="#f3f3f3"/><stop offset="1" stop-color="#dcdcdc"/></radialGradient></defs><rect width="124" height="124" fill="url(#cg)"/><path d="M26.5 52L61 3.8L97.5 52" stroke="#3a3a3a" stroke-width="4.2" fill="none" stroke-linejoin="round"/><circle cx="61" cy="4" r="5" fill="#3a3a3a"/><rect x="10.5" y="53.5" width="103" height="66" rx="9" fill="#fff" stroke="#3a3a3a" stroke-width="5"/><rect x="20" y="62.5" width="85" height="49" fill="none" stroke="#3a3a3a" stroke-width="2.4"/><text x="26.5" y="90.3" font-family="Liberation Sans" font-weight="700" font-size="17.6" fill="#3a3a3a" stroke="#3a3a3a" stroke-width=".4" textLength="72" lengthAdjust="spacingAndGlyphs">CLOSED</text><text x="25.5" y="106" font-family="Liberation Sans" font-weight="700" font-size="11.8" fill="#111" textLength="73" lengthAdjust="spacingAndGlyphs">Dec12-Jan19</text></svg></div>
<div class="a card" style="left:191.6px;top:762.5px;width:124.5px;height:124.5px;background:#fff;border-color:#d0d0d0;"><svg style="left:0;top:0" width="124.5" height="124.5" viewBox="0 0 124 124"><defs><radialGradient id="cg" cx=".5" cy=".45" r=".75"><stop offset="0" stop-color="#f3f3f3"/><stop offset="1" stop-color="#dcdcdc"/></radialGradient></defs><rect width="124" height="124" fill="url(#cg)"/><path d="M26.5 52L61 3.8L97.5 52" stroke="#3a3a3a" stroke-width="4.2" fill="none" stroke-linejoin="round"/><circle cx="61" cy="4" r="5" fill="#3a3a3a"/><rect x="10.5" y="53.5" width="103" height="66" rx="9" fill="#fff" stroke="#3a3a3a" stroke-width="5"/><rect x="20" y="62.5" width="85" height="49" fill="none" stroke="#3a3a3a" stroke-width="2.4"/><text x="26" y="93.6" font-family="Liberation Sans" font-weight="700" font-size="20.5" fill="#3a3a3a" stroke="#3a3a3a" stroke-width=".5" textLength="72.5" lengthAdjust="spacingAndGlyphs">CLOSED</text></svg></div>
<div class="a card" style="left:332.7px;top:762.5px;width:124.5px;height:124.5px;background:#fff;border-color:#e0e0e0;"><svg style="left:0;top:0" width="124.5" height="124.5" viewBox="0 0 124 124"><path d="M26.5 52L61 3.8L97.5 52" stroke="#3a3a3a" stroke-width="4.2" fill="none" stroke-linejoin="round"/><circle cx="61" cy="4" r="5" fill="#3a3a3a"/><rect x="10.5" y="53.5" width="103" height="66" rx="9" fill="#fff" stroke="#3a3a3a" stroke-width="5"/><rect x="20" y="62.5" width="85" height="49" fill="none" stroke="#3a3a3a" stroke-width="2.4"/><text x="26" y="93.6" font-family="Liberation Sans" font-weight="700" font-size="20.5" fill="#3a3a3a" stroke="#3a3a3a" stroke-width=".5" textLength="72.5" lengthAdjust="spacingAndGlyphs">CLOSED</text></svg></div>
<div class="a card" style="left:473.8px;top:762.5px;width:124.5px;height:124.5px;background:#fff;border-color:#e0e0e0;"><svg style="left:0;top:0" width="124.5" height="124.5" viewBox="0 0 124 124"><defs><filter id="bb"><feGaussianBlur stdDeviation=".7"/></filter></defs><rect width="124" height="124" fill="#fafafa"/><rect x="0" y="4" width="124" height="115.5" fill="#4b4740"/><g filter="url(#bb)"><rect x="11.5" y="8.5" width="14.5" height="15" fill="#c06048"/><rect x="13.8" y="12.1" width="5.1" height="5.5" fill="#9ab8d8" opacity=".8"/><rect x="19.8" y="8.8" width="4.4" height="5.8" fill="#9ab8d8" opacity=".8"/><rect x="12.0" y="10.1" width="4.1" height="5.6" fill="#f0f0f0" opacity=".8"/><rect x="16.4" y="14.2" width="3.0" height="3.7" fill="#d8b060" opacity=".8"/><rect x="13.1" y="17.2" width="4.2" height="5.3" fill="#e8e0d8" opacity=".8"/><rect x="27.0" y="8.5" width="14.5" height="15" fill="#6a8a50"/><rect x="32.6" y="12.9" width="3.4" height="5.9" fill="#c84a3a" opacity=".8"/><rect x="28.9" y="10.7" width="5.9" height="5.6" fill="#d8b060" opacity=".8"/><rect x="29.8" y="10.5" width="5.6" height="4.9" fill="#6a9a4a" opacity=".8"/><rect x="35.5" y="15.4" width="5.9" height="5.7" fill="#d8b060" opacity=".8"/><rect x="27.2" y="12.6" width="5.8" height="3.8" fill="#b03030" opacity=".8"/><rect x="11.5" y="24.5" width="14.5" height="15" fill="#b89060"/><rect x="18.9" y="30.4" width="4.8" height="5.1" fill="#e8e0d8" opacity=".8"/><rect x="14.3" y="32.7" width="4.4" height="3.9" fill="#8a5a4a" opacity=".8"/><rect x="15.8" y="26.3" width="3.8" height="5.8" fill="#7a4a8a" opacity=".8"/><rect x="14.7" y="28.5" width="4.6" height="4.3" fill="#f0f0f0" opacity=".8"/><rect x="16.7" y="24.6" width="3.1" height="3.5" fill="#4a6ab0" opacity=".8"/><rect x="27.0" y="24.5" width="14.5" height="15" fill="#c8a890"/><rect x="33.8" y="33.8" width="5.8" height="4.0" fill="#b03030" opacity=".8"/><rect x="35.0" y="27.0" width="4.4" height="4.8" fill="#b03030" opacity=".8"/><rect x="34.7" y="24.9" width="5.8" height="3.3" fill="#b03030" opacity=".8"/><rect x="31.6" y="28.1" width="3.4" height="3.8" fill="#7a4a8a" opacity=".8"/><rect x="31.9" y="27.6" width="4.0" height="3.5" fill="#e8e0d8" opacity=".8"/><rect x="12.5" y="46" width="14.5" height="15" fill="#9aa8b8"/><rect x="13.8" y="52.9" width="6.0" height="3.5" fill="#c84a3a" opacity=".8"/><rect x="13.2" y="52.0" width="5.8" height="3.1" fill="#7a4a8a" opacity=".8"/><rect x="17.8" y="54.3" width="4.4" height="4.3" fill="#c84a3a" opacity=".8"/><rect x="21.3" y="52.4" width="5.4" height="4.0" fill="#4a6ab0" opacity=".8"/><rect x="13.7" y="53.3" width="5.8" height="4.9" fill="#f0f0f0" opacity=".8"/><rect x="28.0" y="46" width="14.5" height="15" fill="#c8a890"/><rect x="29.5" y="49.7" width="3.2" height="4.3" fill="#6a9a4a" opacity=".8"/><rect x="32.1" y="56.0" width="5.6" height="5.9" fill="#8a5a4a" opacity=".8"/><rect x="36.6" y="52.9" width="4.0" height="3.8" fill="#8a5a4a" opacity=".8"/><rect x="31.6" y="47.5" width="4.1" height="6.0" fill="#6a9a4a" opacity=".8"/><rect x="33.6" y="51.0" width="4.0" height="3.3" fill="#d8b060" opacity=".8"/><rect x="12.5" y="62" width="14.5" height="15" fill="#7a8a9a"/><rect x="19.5" y="70.7" width="4.1" height="5.4" fill="#b03030" opacity=".8"/><rect x="18.8" y="68.6" width="5.3" height="4.1" fill="#7a4a8a" opacity=".8"/><rect x="18.5" y="70.4" width="3.8" height="5.9" fill="#7a4a8a" opacity=".8"/><rect x="15.1" y="71.5" width="4.9" height="4.7" fill="#c84a3a" opacity=".8"/><rect x="16.8" y="69.7" width="4.0" height="3.8" fill="#d8b060" opacity=".8"/><rect x="28.0" y="62" width="14.5" height="15" fill="#7a8a9a"/><rect x="33.8" y="70.0" width="4.0" height="4.9" fill="#7a4a8a" opacity=".8"/><rect x="36.4" y="66.1" width="5.8" height="3.5" fill="#7a4a8a" opacity=".8"/><rect x="32.0" y="65.6" width="4.0" height="3.4" fill="#6a9a4a" opacity=".8"/><rect x="29.8" y="65.6" width="5.6" height="3.8" fill="#e8e0d8" opacity=".8"/><rect x="34.5" y="69.3" width="3.5" height="5.3" fill="#e07050" opacity=".8"/><rect x="13.0" y="85" width="14.5" height="15" fill="#7a8a9a"/><rect x="19.0" y="89.2" width="4.9" height="5.3" fill="#9ab8d8" opacity=".8"/><rect x="15.4" y="95.0" width="3.6" height="4.8" fill="#e07050" opacity=".8"/><rect x="18.9" y="87.2" width="5.1" height="4.9" fill="#c84a3a" opacity=".8"/><rect x="21.9" y="94.8" width="3.5" height="5.7" fill="#e8e0d8" opacity=".8"/><rect x="15.9" y="86.8" width="3.6" height="3.1" fill="#8a5a4a" opacity=".8"/><rect x="28.5" y="85" width="14.5" height="15" fill="#a03838"/><rect x="31.9" y="91.1" width="4.8" height="3.7" fill="#b03030" opacity=".8"/><rect x="28.5" y="89.1" width="3.8" height="4.2" fill="#e8e0d8" opacity=".8"/><rect x="34.7" y="90.5" width="5.9" height="4.6" fill="#d8b060" opacity=".8"/><rect x="29.4" y="90.5" width="4.0" height="4.7" fill="#b03030" opacity=".8"/><rect x="35.9" y="89.2" width="5.4" height="4.9" fill="#b03030" opacity=".8"/><rect x="13.0" y="101" width="14.5" height="15" fill="#8a6a5a"/><rect x="14.3" y="107.0" width="4.7" height="5.9" fill="#6a9a4a" opacity=".8"/><rect x="18.5" y="104.5" width="5.7" height="3.0" fill="#e8e0d8" opacity=".8"/><rect x="15.9" y="110.2" width="4.6" height="4.0" fill="#e07050" opacity=".8"/><rect x="16.4" y="105.3" width="3.7" height="3.9" fill="#7a4a8a" opacity=".8"/><rect x="16.4" y="110.6" width="5.7" height="4.8" fill="#d8b060" opacity=".8"/><rect x="28.5" y="101" width="14.5" height="15" fill="#8a5a7a"/><rect x="37.3" y="106.0" width="4.2" height="4.0" fill="#d8b060" opacity=".8"/><rect x="32.9" y="103.9" width="4.4" height="3.4" fill="#e07050" opacity=".8"/><rect x="37.1" y="103.5" width="3.1" height="3.4" fill="#f0f0f0" opacity=".8"/><rect x="28.6" y="106.3" width="3.8" height="5.8" fill="#c84a3a" opacity=".8"/><rect x="30.7" y="103.7" width="3.5" height="6.0" fill="#d8b060" opacity=".8"/><rect x="78.0" y="8.5" width="14.5" height="15" fill="#8a6a5a"/><rect x="83.5" y="13.2" width="4.9" height="4.8" fill="#7a4a8a" opacity=".8"/><rect x="86.1" y="8.7" width="3.4" height="3.8" fill="#7a4a8a" opacity=".8"/><rect x="81.0" y="11.5" width="4.6" height="4.4" fill="#b03030" opacity=".8"/><rect x="84.1" y="16.6" width="3.4" height="3.0" fill="#3a3a3a" opacity=".8"/><rect x="82.1" y="17.7" width="5.7" height="4.6" fill="#c84a3a" opacity=".8"/><rect x="93.5" y="8.5" width="14.5" height="15" fill="#d8d0c8"/><rect x="100.5" y="12.8" width="4.7" height="5.1" fill="#9ab8d8" opacity=".8"/><rect x="99.3" y="17.1" width="5.5" height="4.4" fill="#9ab8d8" opacity=".8"/><rect x="101.2" y="10.5" width="3.9" height="5.5" fill="#e8e0d8" opacity=".8"/><rect x="96.2" y="8.5" width="5.3" height="4.7" fill="#9ab8d8" opacity=".8"/><rect x="100.5" y="17.6" width="3.4" height="4.4" fill="#3a3a3a" opacity=".8"/><rect x="78.0" y="24.5" width="14.5" height="15" fill="#8a6a5a"/><rect x="86.8" y="29.9" width="4.3" height="4.6" fill="#c84a3a" opacity=".8"/><rect x="78.6" y="26.8" width="5.5" height="5.4" fill="#9ab8d8" opacity=".8"/><rect x="86.5" y="27.8" width="4.3" height="3.2" fill="#f0f0f0" opacity=".8"/><rect x="84.3" y="25.0" width="5.5" height="3.7" fill="#9ab8d8" opacity=".8"/><rect x="85.4" y="25.6" width="5.7" height="6.0" fill="#7a4a8a" opacity=".8"/><rect x="93.5" y="24.5" width="14.5" height="15" fill="#8a6a5a"/><rect x="94.8" y="30.6" width="4.2" height="3.5" fill="#e07050" opacity=".8"/><rect x="95.4" y="30.1" width="5.0" height="5.2" fill="#d8b060" opacity=".8"/><rect x="94.0" y="30.3" width="5.2" height="5.6" fill="#6a9a4a" opacity=".8"/><rect x="93.6" y="25.4" width="5.1" height="4.5" fill="#b03030" opacity=".8"/><rect x="101.9" y="28.2" width="3.2" height="5.1" fill="#6a9a4a" opacity=".8"/><rect x="78.0" y="46" width="14.5" height="15" fill="#c06048"/><rect x="83.7" y="51.1" width="5.7" height="4.7" fill="#e07050" opacity=".8"/><rect x="80.0" y="46.6" width="3.7" height="5.5" fill="#d8b060" opacity=".8"/><rect x="82.7" y="47.3" width="3.7" height="4.1" fill="#7a4a8a" opacity=".8"/><rect x="81.5" y="47.3" width="3.1" height="4.0" fill="#e07050" opacity=".8"/><rect x="84.0" y="46.9" width="3.4" height="4.8" fill="#4a6ab0" opacity=".8"/><rect x="93.5" y="46" width="14.5" height="15" fill="#d8d0c8"/><rect x="101.4" y="50.8" width="4.0" height="5.4" fill="#c84a3a" opacity=".8"/><rect x="98.4" y="49.8" width="5.5" height="5.8" fill="#f0f0f0" opacity=".8"/><rect x="99.6" y="48.2" width="3.3" height="5.9" fill="#9ab8d8" opacity=".8"/><rect x="97.9" y="48.1" width="5.1" height="4.1" fill="#4a6ab0" opacity=".8"/><rect x="96.1" y="55.3" width="5.1" height="5.4" fill="#f0f0f0" opacity=".8"/><rect x="78.0" y="62" width="14.5" height="15" fill="#6a8a50"/><rect x="84.5" y="65.6" width="3.9" height="4.9" fill="#b03030" opacity=".8"/><rect x="82.7" y="67.9" width="4.7" height="5.2" fill="#f0f0f0" opacity=".8"/><rect x="78.6" y="62.4" width="3.6" height="3.6" fill="#8a5a4a" opacity=".8"/><rect x="86.0" y="66.8" width="5.3" height="3.0" fill="#8a5a4a" opacity=".8"/><rect x="80.7" y="71.3" width="5.8" height="4.0" fill="#8a5a4a" opacity=".8"/><rect x="93.5" y="62" width="14.5" height="15" fill="#c8a890"/><rect x="95.2" y="68.5" width="3.2" height="5.6" fill="#8a5a4a" opacity=".8"/><rect x="94.9" y="64.5" width="3.8" height="3.5" fill="#d8b060" opacity=".8"/><rect x="99.5" y="62.3" width="5.7" height="4.0" fill="#b03030" opacity=".8"/><rect x="96.3" y="62.6" width="3.1" height="4.4" fill="#6a9a4a" opacity=".8"/><rect x="94.6" y="68.7" width="3.9" height="5.0" fill="#7a4a8a" opacity=".8"/><rect x="78.0" y="85" width="14.5" height="15" fill="#6a8a50"/><rect x="78.3" y="92.1" width="4.7" height="5.0" fill="#e07050" opacity=".8"/><rect x="81.6" y="94.7" width="4.1" height="3.9" fill="#8a5a4a" opacity=".8"/><rect x="81.3" y="85.7" width="6.0" height="4.4" fill="#4a6ab0" opacity=".8"/><rect x="79.6" y="87.1" width="3.1" height="4.8" fill="#7a4a8a" opacity=".8"/><rect x="86.8" y="85.1" width="3.2" height="5.3" fill="#f0f0f0" opacity=".8"/><rect x="93.5" y="85" width="14.5" height="15" fill="#6a8a50"/><rect x="93.9" y="90.5" width="6.0" height="4.6" fill="#b03030" opacity=".8"/><rect x="102.0" y="92.2" width="3.7" height="5.4" fill="#e8e0d8" opacity=".8"/><rect x="101.9" y="85.5" width="3.7" height="3.2" fill="#f0f0f0" opacity=".8"/><rect x="100.5" y="85.5" width="5.5" height="4.3" fill="#9ab8d8" opacity=".8"/><rect x="94.0" y="85.4" width="5.9" height="3.5" fill="#3a3a3a" opacity=".8"/><rect x="78.0" y="101" width="14.5" height="15" fill="#9aa8b8"/><rect x="81.6" y="106.3" width="3.3" height="3.9" fill="#e8e0d8" opacity=".8"/><rect x="78.8" y="110.9" width="3.5" height="3.2" fill="#7a4a8a" opacity=".8"/><rect x="79.9" y="101.2" width="4.6" height="4.5" fill="#e07050" opacity=".8"/><rect x="84.9" y="106.2" width="3.4" height="3.0" fill="#d8b060" opacity=".8"/><rect x="84.2" y="109.9" width="6.0" height="4.7" fill="#6a9a4a" opacity=".8"/><rect x="93.5" y="101" width="14.5" height="15" fill="#b89060"/><rect x="97.8" y="108.8" width="3.8" height="4.2" fill="#6a9a4a" opacity=".8"/><rect x="94.7" y="101.8" width="3.7" height="3.3" fill="#f0f0f0" opacity=".8"/><rect x="102.2" y="107.7" width="3.8" height="4.5" fill="#4a6ab0" opacity=".8"/><rect x="93.9" y="103.0" width="3.9" height="4.1" fill="#e8e0d8" opacity=".8"/><rect x="94.1" y="108.7" width="4.1" height="5.3" fill="#c84a3a" opacity=".8"/></g><rect x="46" y="9" width="26" height="27" fill="#141414"/><circle cx="59" cy="22.5" r="10" fill="none" stroke="#999" stroke-width=".8"/><path d="M54 16c3-1 6 1 5 4s-4 2-2 5 4 3 4 6" stroke="#5fbf3f" stroke-width="4" fill="none"/><rect x="46.5" y="47.5" width="27" height="27" fill="#141414"/><circle cx="60" cy="61" r="9.5" fill="#d32f2f"/><rect x="54" y="58" width="12" height="3.5" fill="#f5d0d0"/><rect x="48" y="88" width="26" height="27" fill="#141414"/><rect x="51" y="98" width="20" height="3" fill="#ccc"/><rect x="53" y="104" width="15" height="1.5" fill="#999"/><circle cx="61" cy="92" r="1.5" fill="#c0392b"/><path d="M111 72L124 65V104L118 102Z" fill="#e8401c"/></svg></div>
<div class="a card" style="left:614.9px;top:762.5px;width:124.5px;height:124.5px;background:#fff;border-color:#e8e8e8;"><svg style="left:0;top:0" width="124.5" height="124.5" viewBox="0 0 124 124"><defs><filter id="bl" x="-10%" y="-10%" width="120%" height="120%"><feGaussianBlur stdDeviation="1.6"/></filter><filter id="bl1"><feGaussianBlur stdDeviation=".8"/></filter></defs><rect width="124" height="124" fill="#58703a"/><g filter="url(#bl)"><rect x="0" y="0" width="124" height="124" fill="#6a8040"/><circle cx="14.0" cy="67.2" r="6.1" fill="#f4f4ee"/><circle cx="20.5" cy="27.4" r="2.6" fill="#d8e0b0"/><circle cx="80.8" cy="62.0" r="5.1" fill="#d8e0b0"/><circle cx="82.7" cy="49.5" r="4.7" fill="#eef2e6"/><circle cx="89.8" cy="37.2" r="3.4" fill="#8aa050"/><circle cx="-1.0" cy="70.5" r="2.9" fill="#eef2e6"/><circle cx="108.4" cy="46.8" r="6.3" fill="#f4f4ee"/><circle cx="23.6" cy="119.2" r="2.7" fill="#2e4420"/><circle cx="126.4" cy="48.3" r="2.8" fill="#b8c890"/><circle cx="99.3" cy="31.1" r="2.8" fill="#3e5a28"/><circle cx="-3.0" cy="49.9" r="6.2" fill="#f8f8f4"/><circle cx="28.0" cy="8.5" r="2.7" fill="#d8e0b0"/><circle cx="18.8" cy="69.9" r="4.3" fill="#b8c890"/><circle cx="127.0" cy="98.1" r="4.2" fill="#2e4420"/><circle cx="10.6" cy="51.4" r="3.4" fill="#8aa050"/><circle cx="110.8" cy="125.6" r="4.9" fill="#f4f4ee"/><circle cx="23.2" cy="47.8" r="5.9" fill="#eef2e6"/><circle cx="0.6" cy="14.6" r="4.3" fill="#f4f4ee"/><circle cx="98.5" cy="39.1" r="3.7" fill="#eef2e6"/><circle cx="5.0" cy="23.0" r="5.0" fill="#f4f4ee"/><circle cx="106.5" cy="13.2" r="4.0" fill="#f8f8f4"/><circle cx="16.2" cy="79.3" r="4.7" fill="#2e4420"/><circle cx="113.2" cy="75.9" r="4.2" fill="#eef2e6"/><circle cx="9.6" cy="63.7" r="3.5" fill="#2e4420"/><circle cx="4.3" cy="50.1" r="3.5" fill="#f4f4ee"/><circle cx="18.6" cy="44.4" r="4.8" fill="#f8f8f4"/><circle cx="7.4" cy="13.5" r="4.3" fill="#3e5a28"/><circle cx="83.0" cy="87.6" r="4.8" fill="#f8f8f4"/><circle cx="88.9" cy="124.0" r="2.6" fill="#eef2e6"/><circle cx="5.1" cy="68.2" r="5.4" fill="#f8f8f4"/><circle cx="101.3" cy="117.6" r="3.9" fill="#d8e0b0"/><circle cx="115.7" cy="111.7" r="4.2" fill="#f4f4ee"/><circle cx="110.7" cy="71.8" r="5.0" fill="#2e4420"/><circle cx="45.8" cy="-3.3" r="2.8" fill="#eef2e6"/><circle cx="80.7" cy="128.1" r="6.0" fill="#3e5a28"/><circle cx="36.6" cy="6.8" r="2.6" fill="#eef2e6"/><circle cx="115.1" cy="44.3" r="3.1" fill="#b8c890"/><circle cx="21.6" cy="52.7" r="5.7" fill="#b8c890"/><circle cx="113.0" cy="46.5" r="4.8" fill="#3e5a28"/><circle cx="23.1" cy="13.0" r="3.9" fill="#f4f4ee"/><circle cx="90.3" cy="122.3" r="3.6" fill="#f8f8f4"/><circle cx="10.1" cy="58.2" r="6.2" fill="#2e4420"/><circle cx="85.9" cy="32.7" r="3.9" fill="#f4f4ee"/><circle cx="80.9" cy="49.3" r="3.3" fill="#8aa050"/><circle cx="123.4" cy="86.7" r="3.3" fill="#d8e0b0"/><circle cx="19.0" cy="31.5" r="3.9" fill="#f8f8f4"/><circle cx="23.6" cy="115.6" r="6.4" fill="#8aa050"/><circle cx="41.7" cy="6.1" r="4.3" fill="#2e4420"/><circle cx="97.9" cy="60.3" r="2.6" fill="#eef2e6"/><circle cx="52.5" cy="-0.3" r="4.6" fill="#f8f8f4"/><circle cx="121.7" cy="61.0" r="6.3" fill="#eef2e6"/><circle cx="96.6" cy="53.9" r="4.7" fill="#f8f8f4"/><circle cx="85.0" cy="122.9" r="6.0" fill="#b8c890"/><circle cx="76.1" cy="-1.3" r="6.4" fill="#2e4420"/><circle cx="87.6" cy="3.8" r="4.7" fill="#2e4420"/><circle cx="100" cy="45" r="9" fill="#f3f3ee"/><circle cx="108" cy="60" r="8" fill="#f3f3ee"/><circle cx="95" cy="75" r="7" fill="#f3f3ee"/><circle cx="112" cy="85" r="8" fill="#f3f3ee"/><circle cx="118" cy="100" r="6" fill="#f3f3ee"/><circle cx="100" cy="100" r="5" fill="#f3f3ee"/><circle cx="25" cy="25" r="7" fill="#f3f3ee"/><circle cx="12" cy="35" r="6" fill="#f3f3ee"/><circle cx="110" cy="25" r="6" fill="#f3f3ee"/><circle cx="80" cy="15" r="5" fill="#f3f3ee"/><circle cx="60" cy="5" r="6" fill="#f3f3ee"/><ellipse cx="22" cy="62" rx="16" ry="15" fill="#d41a44"/><ellipse cx="12" cy="72" rx="8" ry="8" fill="#c0163a"/><ellipse cx="30" cy="55" rx="7" ry="6" fill="#e02850"/><path d="M0 124V86C6 82 14 80 24 80L26 124Z" fill="#4a3d38"/></g><g filter="url(#bl1)"><path d="M30 40C26 22 36 6 54 6S80 14 80 34C80 48 76 56 72 60L38 60C34 55 31 48 30 40Z" fill="#8f8c88"/><path d="M35 38C35 26 43 20 55 20S74 28 74 42C74 58 66 72 55 73S35 58 35 38Z" fill="#dfb49c"/><path d="M36 28C40 18 52 14 62 18S76 28 74 36C68 28 58 24 48 26S38 30 36 28Z" fill="#8f8c88"/><path d="M44 70L66 70L72 92H42Z" fill="#d9a890"/><path d="M0 124V100C6 88 20 78 42 70C48 84 58 94 66 94C70 86 72 78 76 74C86 78 96 86 104 100L112 124Z" fill="#0d6a66"/><path d="M56 94C62 104 66 114 66 124H84C80 110 74 98 66 92Z" fill="#0a5c58"/></g><path d="M47 58C52 61 58 61 62 58" stroke="#f4f0ec" stroke-width="2" fill="none"/><path d="M44 42h6M59 42h6" stroke="#6a4a3a" stroke-width="1.3"/></svg></div>
<div class="a card" style="left:756.0px;top:762.5px;width:124.5px;height:124.5px;background:#fff;border-color:#d0d0d0;"><svg style="left:0;top:0" width="124.5" height="124.5" viewBox="0 0 124 124"><defs><linearGradient id="pg" x1="0" y1="0" x2="0" y2="1"><stop offset="0" stop-color="#e9e9e9"/><stop offset="1" stop-color="#d9d9d9"/></linearGradient></defs><rect width="124" height="61" fill="url(#pg)"/><rect y="61" width="124" height="64" fill="#f5f5f5"/><path d="M38 17H71L87 33V61H38Z" fill="#8c8c8c"/><path d="M71 17V33H87" fill="#fff" opacity=".0"/><rect x="43" y="22" width="22" height="4" fill="#e5e5e5"/><rect x="43" y="30" width="26" height="4" fill="#e5e5e5"/><rect x="43" y="38" width="38" height="4" fill="#e5e5e5"/><rect x="43" y="46" width="14" height="4" fill="#e5e5e5"/><rect x="60" y="46" width="21" height="10" fill="#e5e5e5"/><rect x="43" y="53" width="14" height="3" fill="#e5e5e5"/><path d="M72 19L85 33H72Z" fill="#e5e5e5"/></svg><div class="t" style="left:0;top:65.5px;width:124px;text-align:center;line-height:17.5px;font-size:13.5px;color:#2c3338;-webkit-text-stroke:.45px #2c3338;white-space:normal">communicating_<br>with_students.pd<br>f</div></div>
<div class="a card" style="left:897.1px;top:762.5px;width:124.5px;height:124.5px;background:#fff;border-color:#e6e6e6;"><svg style="left:0;top:0" width="124.5" height="124.5" viewBox="0 0 124 124"><rect width="124" height="124" fill="#fff"/><g transform="translate(0,-1.7)"><rect width="124" height="124" fill="#fff"/><rect x="0" y="4" width="124" height="2.5" fill="#111"/><rect x="0" y="117" width="124" height="3" fill="#111"/><path d="M-2 20H10V34C10 44 4 50 -2 52Z" fill="#c8102e"/><path d="M0 24H6V34C6 40 3 44 0 46Z" fill="#fff"/><text x="14" y="36.5" font-family="Liberation Sans" font-size="17.5" fill="#222" letter-spacing=".55">Western Oregon</text><text x="17" y="49" font-family="Liberation Sans" font-size="10" fill="#c8102e" letter-spacing="4.7">UNIVERSITY</text><text x="62" y="82.5" text-anchor="middle" font-family="Liberation Sans" font-weight="700" font-size="16" fill="#111">NAME</text><text x="62" y="101" text-anchor="middle" font-family="Liberation Sans" font-weight="700" font-size="15" fill="#111" letter-spacing="-.2">DEPARTMENT/DIVISION</text></g></svg></div>
<div class="a card" style="left:1038.2px;top:762.5px;width:124.5px;height:124.5px;background:#fff;border-color:#e6e6e6;"><svg style="left:0;top:0" width="124.5" height="124.5" viewBox="0 0 124 124"><rect width="124" height="124" fill="#fff"/><g transform="translate(0,-1.7)"><rect width="124" height="124" fill="#fff"/><rect x="0" y="2.5" width="124" height="2.5" fill="#111"/><rect x="0" y="119" width="124" height="2.5" fill="#111"/><path d="M2 18H20V30C20 38 14 44 11 46C8 44 2 38 2 30Z" fill="#c8102e"/><path d="M8 22C8 16 12 12 11 8C15 12 14 18 14 22Z" fill="#c8102e"/><rect x="8" y="24" width="6" height="16" fill="#fff" opacity=".7"/><text x="25" y="27" font-family="Liberation Sans" font-size="13.8" fill="#222" letter-spacing=".35">Western Oregon</text><text x="27" y="37.5" font-family="Liberation Sans" font-size="8" fill="#c8102e" letter-spacing="3.6">UNIVERSITY</text><text x="62" y="68.5" text-anchor="middle" font-family="Liberation Sans" font-weight="700" font-size="12" fill="#111">NAME</text><text x="62" y="85" text-anchor="middle" font-family="Liberation Sans" font-weight="700" font-size="12" fill="#111">TITLE</text><text x="62" y="102.5" text-anchor="middle" font-family="Liberation Sans" font-weight="700" font-size="10.8" fill="#111" letter-spacing="-.1">DEPARTMENT/DIVISION</text></g></svg></div>
<div class="a card" style="left:191.6px;top:904px;width:124.5px;height:124.5px;background:#fff;border-color:#d6d6d6;"><svg style="left:0;top:0" width="124.5" height="124.5" viewBox="0 0 124 124"><rect width="124" height="124" fill="#fff"/><rect width="124" height="12" fill="#e2e2e2"/><rect y="11.5" width="124" height=".8" fill="#c8c8c8"/><rect x="54" y="1.5" width="3" height="3" fill="#5aa0d8"/><rect x="58" y="2" width="14" height="2" fill="#888" opacity=".6"/><rect x="0" y="4" width="5" height="7" fill="#666"/><rect x="6" y="5.5" width="5" height="4" fill="#bbb"/><rect x="15" y="5" width="10" height="5" fill="#f0f0f0" stroke="#ccc" stroke-width=".5"/><rect x="28" y="5" width="10" height="5" fill="#f0f0f0" stroke="#ccc" stroke-width=".5"/><rect x="40" y="5" width="8" height="5" fill="#f0f0f0" stroke="#ccc" stroke-width=".5"/><rect x="52" y="5" width="8" height="5" fill="#f0f0f0" stroke="#ccc" stroke-width=".5"/><rect x="97" y="5" width="27" height="5" fill="#f4f4f4" stroke="#ccc" stroke-width=".5"/><rect x="0" y="14.5" width="26" height="1.6" fill="#333" opacity=".65"/><rect x="0" y="19.1" width="24" height="1.6" fill="#333" opacity=".65"/><rect x="0" y="23.7" width="14" height="1.6" fill="#333" opacity=".65"/><rect x="0" y="28.3" width="10" height="1.6" fill="#333" opacity=".65"/><rect x="0" y="32.9" width="16" height="1.6" fill="#333" opacity=".65"/><rect x="0" y="37.5" width="12" height="1.6" fill="#333" opacity=".65"/><rect x="0" y="42.1" width="8" height="1.6" fill="#333" opacity=".65"/><rect x="0" y="46.7" width="12" height="1.6" fill="#333" opacity=".65"/><rect x="0" y="51.3" width="10" height="1.6" fill="#333" opacity=".65"/><rect x="0" y="55.9" width="12" height="1.6" fill="#333" opacity=".65"/><rect x="0" y="33.5" width="32" height="4" fill="#9cc4ee"/><rect x="57" y="16" width="67" height="20.5" fill="#3d9ae6"/><ellipse cx="66" cy="28" rx="11" ry="7" fill="#f4f6f8"/><ellipse cx="112" cy="24" rx="10" ry="8" fill="#eef2f6"/><rect x="57" y="31" width="67" height="5.5" fill="#9a8a84"/><rect x="57" y="34" width="20" height="2.5" fill="#56708a"/><defs><linearGradient id="fm" x1="0" y1="0" x2="1" y2="0"><stop offset="0" stop-color="#e6e6e6"/><stop offset=".6" stop-color="#d2cfcc"/><stop offset="1" stop-color="#bdb8b4"/></linearGradient></defs><rect x="7.5" y="36" width="91.5" height="90" fill="url(#fm)"/><rect x="8" y="41.6" width="91" height="5.2" fill="#2a7ae0"/><rect x="14" y="38.2" width="10" height="1.5" fill="#333" opacity=".6"/><rect x="14" y="43.5" width="15" height="1.5" fill="#fff" opacity=".8"/><rect x="92" y="43" width="3" height="2.5" fill="#fff"/><rect x="14" y="51" width="22" height="1.5" fill="#333" opacity=".6"/><rect x="99" y="36" width="25" height="90" fill="#e4e4e4"/><rect x="101" y="41.5" width="4" height="4" fill="#c8102e"/><rect x="107" y="42.5" width="17" height="2" fill="#333" opacity=".7"/><rect x="99" y="50" width="25" height="5" fill="#2a7ae0"/><rect x="101" y="50.5" width="4" height="4" fill="#c8102e"/><rect x="107" y="51.5" width="17" height="2" fill="#fff"/><rect x="101" y="57" width="4" height="4" fill="#6a3a20"/></svg></div>
<div class="a card" style="left:332.7px;top:904px;width:124.5px;height:124.5px;background:#fff;border-color:#d6d6d6;"><svg style="left:0;top:0" width="124.5" height="124.5" viewBox="0 0 124 124"><rect width="124" height="124" fill="#fff"/><rect width="124" height="6" fill="#f3f3f3"/><rect x="0" y="6" width="124" height="5" fill="#fafafa"/><rect x="2" y="2" width="6" height="2" fill="#888" opacity=".5"/><rect x="14" y="2" width="14" height="2" fill="#888" opacity=".5"/><rect x="50" y="1" width="20" height="1" fill="#888" opacity=".4"/><rect x="110" y="2" width="12" height="2" fill="#555" opacity=".5"/><rect x="4" y="8" width="3" height="3" fill="#777" opacity=".45"/><rect x="10" y="8" width="3" height="3" fill="#777" opacity=".45"/><rect x="16" y="8" width="3" height="3" fill="#777" opacity=".45"/><rect x="22" y="8" width="3" height="3" fill="#777" opacity=".45"/><rect x="28" y="8" width="3" height="3" fill="#777" opacity=".45"/><rect x="34" y="8" width="3" height="3" fill="#777" opacity=".45"/><rect x="40" y="8" width="3" height="3" fill="#777" opacity=".45"/><rect x="46" y="8" width="3" height="3" fill="#777" opacity=".45"/><rect x="52" y="8" width="3" height="3" fill="#777" opacity=".45"/><rect x="58" y="8" width="3" height="3" fill="#777" opacity=".45"/><rect x="64" y="8" width="3" height="3" fill="#777" opacity=".45"/><rect x="70" y="8" width="3" height="3" fill="#777" opacity=".45"/><rect x="76" y="8" width="3" height="3" fill="#777" opacity=".45"/><rect x="82" y="8" width="3" height="3" fill="#777" opacity=".45"/><rect x="88" y="8" width="3" height="3" fill="#777" opacity=".45"/><rect x="94" y="8" width="3" height="3" fill="#777" opacity=".45"/><rect x="100" y="8" width="3" height="3" fill="#777" opacity=".45"/><rect x="106" y="8" width="3" height="3" fill="#777" opacity=".45"/><rect x="112" y="8" width="3" height="3" fill="#777" opacity=".45"/><rect x="118" y="8" width="3" height="3" fill="#777" opacity=".45"/><rect x="20.0" y="15" width="2.5" height="3" fill="#777" opacity=".45"/><rect x="25.5" y="15" width="2.5" height="3" fill="#777" opacity=".45"/><rect x="31.0" y="15" width="2.5" height="3" fill="#777" opacity=".45"/><rect x="36.5" y="15" width="2.5" height="3" fill="#777" opacity=".45"/><rect x="42.0" y="15" width="2.5" height="3" fill="#777" opacity=".45"/><rect x="47.5" y="15" width="2.5" height="3" fill="#777" opacity=".45"/><rect x="53.0" y="15" width="2.5" height="3" fill="#777" opacity=".45"/><rect x="58.5" y="15" width="2.5" height="3" fill="#777" opacity=".45"/><rect x="64.0" y="15" width="2.5" height="3" fill="#777" opacity=".45"/><rect x="69.5" y="15" width="2.5" height="3" fill="#777" opacity=".45"/><rect x="75.0" y="15" width="2.5" height="3" fill="#777" opacity=".45"/><rect x="80.5" y="15" width="2.5" height="3" fill="#777" opacity=".45"/><rect x="86.0" y="15" width="2.5" height="3" fill="#777" opacity=".45"/><rect x="91.5" y="15" width="2.5" height="3" fill="#777" opacity=".45"/><rect x="97.0" y="15" width="2.5" height="3" fill="#777" opacity=".45"/><rect x="102.5" y="15" width="2.5" height="3" fill="#777" opacity=".45"/><rect x="108.0" y="15" width="2.5" height="3" fill="#777" opacity=".45"/><rect x="113.5" y="15" width="2.5" height="3" fill="#777" opacity=".45"/><rect x="0" y="21" width="124" height=".6" fill="#ddd"/><rect x="80" y="21" width="3" height="104" fill="#cfcfcf"/><rect x="83" y="21" width="41" height="104" fill="#fafafa"/><rect x="86" y="28" width="30" height="1.5" fill="#777" opacity=".6"/><rect x="86" y="38" width="34" height="25" fill="#fff" stroke="#ddd" stroke-width=".6"/><circle cx="90" cy="43" r="1.5" fill="#777"/><rect x="93" y="42" width="15" height="1.5" fill="#777" opacity=".6"/><rect x="88" y="47" width="20" height="1" fill="#999" opacity=".6"/><path d="M43 47h7v4.5c0 2.5-1.8 4.2-3.5 5-1.7-.8-3.5-2.5-3.5-5z" fill="#c8102e"/><rect x="52" y="48.5" width="24" height="2.2" fill="#333" opacity=".85"/><rect x="52" y="52.5" width="16" height="1" fill="#c8102e" opacity=".6"/></svg></div>
<div class="a card" style="left:473.8px;top:904px;width:124.5px;height:124.5px;background:#fff;border-color:#d6d6d6;"><svg style="left:0;top:0" width="124.5" height="124.5" viewBox="0 0 124 124"><rect width="124" height="124" fill="#fff"/><rect width="124" height="6" fill="#f3f3f3"/><rect x="0" y="6" width="124" height="5" fill="#fafafa"/><rect x="2" y="2" width="6" height="2" fill="#888" opacity=".5"/><rect x="14" y="2" width="14" height="2" fill="#888" opacity=".5"/><rect x="50" y="1" width="20" height="1" fill="#888" opacity=".4"/><rect x="110" y="2" width="12" height="2" fill="#555" opacity=".5"/><rect x="4" y="8" width="3" height="3" fill="#777" opacity=".45"/><rect x="10" y="8" width="3" height="3" fill="#777" opacity=".45"/><rect x="16" y="8" width="3" height="3" fill="#777" opacity=".45"/><rect x="22" y="8" width="3" height="3" fill="#777" opacity=".45"/><rect x="28" y="8" width="3" height="3" fill="#777" opacity=".45"/><rect x="34" y="8" width="3" height="3" fill="#777" opacity=".45"/><rect x="40" y="8" width="3" height="3" fill="#777" opacity=".45"/><rect x="46" y="8" width="3" height="3" fill="#777" opacity=".45"/><rect x="52" y="8" width="3" height="3" fill="#777" opacity=".45"/><rect x="58" y="8" width="3" height="3" fill="#777" opacity=".45"/><rect x="64" y="8" width="3" height="3" fill="#777" opacity=".45"/><rect x="70" y="8" width="3" height="3" fill="#777" opacity=".45"/><rect x="76" y="8" width="3" height="3" fill="#777" opacity=".45"/><rect x="82" y="8" width="3" height="3" fill="#777" opacity=".45"/><rect x="88" y="8" width="3" height="3" fill="#777" opacity=".45"/><rect x="94" y="8" width="3" height="3" fill="#777" opacity=".45"/><rect x="100" y="8" width="3" height="3" fill="#777" opacity=".45"/><rect x="106" y="8" width="3" height="3" fill="#777" opacity=".45"/><rect x="112" y="8" width="3" height="3" fill="#777" opacity=".45"/><rect x="118" y="8" width="3" height="3" fill="#777" opacity=".45"/><rect x="20.0" y="15" width="2.5" height="3" fill="#777" opacity=".45"/><rect x="25.5" y="15" width="2.5" height="3" fill="#777" opacity=".45"/><rect x="31.0" y="15" width="2.5" height="3" fill="#777" opacity=".45"/><rect x="36.5" y="15" width="2.5" height="3" fill="#777" opacity=".45"/><rect x="42.0" y="15" width="2.5" height="3" fill="#777" opacity=".45"/><rect x="47.5" y="15" width="2.5" height="3" fill="#777" opacity=".45"/><rect x="53.0" y="15" width="2.5" height="3" fill="#777" opacity=".45"/><rect x="58.5" y="15" width="2.5" height="3" fill="#777" opacity=".45"/><rect x="64.0" y="15" width="2.5" height="3" fill="#777" opacity=".45"/><rect x="69.5" y="15" width="2.5" height="3" fill="#777" opacity=".45"/><rect x="75.0" y="15" width="2.5" height="3" fill="#777" opacity=".45"/><rect x="80.5" y="15" width="2.5" height="3" fill="#777" opacity=".45"/><rect x="86.0" y="15" width="2.5" height="3" fill="#777" opacity=".45"/><rect x="91.5" y="15" width="2.5" height="3" fill="#777" opacity=".45"/><rect x="97.0" y="15" width="2.5" height="3" fill="#777" opacity=".45"/><rect x="102.5" y="15" width="2.5" height="3" fill="#777" opacity=".45"/><rect x="108.0" y="15" width="2.5" height="3" fill="#777" opacity=".45"/><rect x="113.5" y="15" width="2.5" height="3" fill="#777" opacity=".45"/><rect x="8" y="13" width="6" height="6" fill="none" stroke="#c678dd" stroke-width="1"/><rect x="0" y="21" width="124" height=".6" fill="#ddd"/><rect x="80" y="21" width="3" height="104" fill="#cfcfcf"/><rect x="83" y="21" width="41" height="104" fill="#fafafa"/><rect x="86" y="28" width="30" height="1.5" fill="#777" opacity=".6"/><rect x="86" y="38" width="34" height="25" fill="#fff" stroke="#ddd" stroke-width=".6"/><circle cx="90" cy="43" r="1.5" fill="#777"/><rect x="93" y="42" width="15" height="1.5" fill="#777" opacity=".6"/><rect x="88" y="47" width="20" height="1" fill="#999" opacity=".6"/><path d="M43 47h7v4.5c0 2.5-1.8 4.2-3.5 5-1.7-.8-3.5-2.5-3.5-5z" fill="#c8102e"/><rect x="52" y="48.5" width="24" height="2.2" fill="#333" opacity=".85"/><rect x="52" y="52.5" width="16" height="1" fill="#c8102e" opacity=".6"/></svg></div>
<div class="a card" style="left:614.9px;top:904px;width:124.5px;height:124.5px;background:#fff;border-color:#d6d6d6;"><svg style="left:0;top:0" width="124.5" height="124.5" viewBox="0 0 124 124"><rect width="124" height="124" fill="#fff"/><rect width="124" height="6" fill="#f3f3f3"/><rect x="0" y="6" width="124" height="5" fill="#fafafa"/><rect x="2" y="2" width="6" height="2" fill="#888" opacity=".5"/><rect x="14" y="2" width="14" height="2" fill="#888" opacity=".5"/><rect x="50" y="1" width="20" height="1" fill="#888" opacity=".4"/><rect x="110" y="2" width="12" height="2" fill="#555" opacity=".5"/><rect x="4" y="8" width="3" height="3" fill="#777" opacity=".45"/><rect x="10" y="8" width="3" height="3" fill="#777" opacity=".45"/><rect x="16" y="8" width="3" height="3" fill="#777" opacity=".45"/><rect x="22" y="8" width="3" height="3" fill="#777" opacity=".45"/><rect x="28" y="8" width="3" height="3" fill="#777" opacity=".45"/><rect x="34" y="8" width="3" height="3" fill="#777" opacity=".45"/><rect x="40" y="8" width="3" height="3" fill="#777" opacity=".45"/><rect x="46" y="8" width="3" height="3" fill="#777" opacity=".45"/><rect x="52" y="8" width="3" height="3" fill="#777" opacity=".45"/><rect x="58" y="8" width="3" height="3" fill="#777" opacity=".45"/><rect x="64" y="8" width="3" height="3" fill="#777" opacity=".45"/><rect x="70" y="8" width="3" height="3" fill="#777" opacity=".45"/><rect x="76" y="8" width="3" height="3" fill="#777" opacity=".45"/><rect x="82" y="8" width="3" height="3" fill="#777" opacity=".45"/><rect x="88" y="8" width="3" height="3" fill="#777" opacity=".45"/><rect x="94" y="8" width="3" height="3" fill="#777" opacity=".45"/><rect x="100" y="8" width="3" height="3" fill="#777" opacity=".45"/><rect x="106" y="8" width="3" height="3" fill="#777" opacity=".45"/><rect x="112" y="8" width="3" height="3" fill="#777" opacity=".45"/><rect x="118" y="8" width="3" height="3" fill="#777" opacity=".45"/><rect x="20.0" y="15" width="2.5" height="3" fill="#777" opacity=".45"/><rect x="25.5" y="15" width="2.5" height="3" fill="#777" opacity=".45"/><rect x="31.0" y="15" width="2.5" height="3" fill="#777" opacity=".45"/><rect x="36.5" y="15" width="2.5" height="3" fill="#777" opacity=".45"/><rect x="42.0" y="15" width="2.5" height="3" fill="#777" opacity=".45"/><rect x="47.5" y="15" width="2.5" height="3" fill="#777" opacity=".45"/><rect x="53.0" y="15" width="2.5" height="3" fill="#777" opacity=".45"/><rect x="58.5" y="15" width="2.5" height="3" fill="#777" opacity=".45"/><rect x="64.0" y="15" width="2.5" height="3" fill="#777" opacity=".45"/><rect x="69.5" y="15" width="2.5" height="3" fill="#777" opacity=".45"/><rect x="75.0" y="15" width="2.5" height="3" fill="#777" opacity=".45"/><rect x="80.5" y="15" width="2.5" height="3" fill="#777" opacity=".45"/><rect x="86.0" y="15" width="2.5" height="3" fill="#777" opacity=".45"/><rect x="91.5" y="15" width="2.5" height="3" fill="#777" opacity=".45"/><rect x="97.0" y="15" width="2.5" height="3" fill="#777" opacity=".45"/><rect x="102.5" y="15" width="2.5" height="3" fill="#777" opacity=".45"/><rect x="108.0" y="15" width="2.5" height="3" fill="#777" opacity=".45"/><rect x="113.5" y="15" width="2.5" height="3" fill="#777" opacity=".45"/><rect x="0" y="21" width="124" height=".6" fill="#ddd"/><rect x="80" y="21" width="3" height="104" fill="#cfcfcf"/><rect x="83" y="21" width="41" height="104" fill="#fafafa"/><rect x="86" y="28" width="30" height="1.5" fill="#777" opacity=".6"/><rect x="86" y="38" width="34" height="25" fill="#fff" stroke="#ddd" stroke-width=".6"/><circle cx="90" cy="43" r="1.5" fill="#777"/><rect x="93" y="42" width="15" height="1.5" fill="#777" opacity=".6"/><rect x="88" y="47" width="20" height="1" fill="#999" opacity=".6"/><path d="M43 47h7v4.5c0 2.5-1.8 4.2-3.5 5-1.7-.8-3.5-2.5-3.5-5z" fill="#c8102e"/><rect x="52" y="48.5" width="24" height="2.2" fill="#333" opacity=".85"/><rect x="52" y="52.5" width="16" height="1" fill="#c8102e" opacity=".6"/></svg></div>
<div class="a card" style="left:756.0px;top:904px;width:124.5px;height:124.5px;background:#fff;border-color:#d6d6d6;"><svg style="left:0;top:0" width="124.5" height="124.5" viewBox="0 0 124 124"><rect width="124" height="124" fill="#fff"/><rect width="124" height="6" fill="#f3f3f3"/><rect x="0" y="6" width="124" height="5" fill="#fafafa"/><rect x="2" y="2" width="6" height="2" fill="#888" opacity=".5"/><rect x="14" y="2" width="14" height="2" fill="#888" opacity=".5"/><rect x="50" y="1" width="20" height="1" fill="#888" opacity=".4"/><rect x="110" y="2" width="12" height="2" fill="#555" opacity=".5"/><rect x="4" y="8" width="3" height="3" fill="#777" opacity=".45"/><rect x="10" y="8" width="3" height="3" fill="#777" opacity=".45"/><rect x="16" y="8" width="3" height="3" fill="#777" opacity=".45"/><rect x="22" y="8" width="3" height="3" fill="#777" opacity=".45"/><rect x="28" y="8" width="3" height="3" fill="#777" opacity=".45"/><rect x="34" y="8" width="3" height="3" fill="#777" opacity=".45"/><rect x="40" y="8" width="3" height="3" fill="#777" opacity=".45"/><rect x="46" y="8" width="3" height="3" fill="#777" opacity=".45"/><rect x="52" y="8" width="3" height="3" fill="#777" opacity=".45"/><rect x="58" y="8" width="3" height="3" fill="#777" opacity=".45"/><rect x="64" y="8" width="3" height="3" fill="#777" opacity=".45"/><rect x="70" y="8" width="3" height="3" fill="#777" opacity=".45"/><rect x="76" y="8" width="3" height="3" fill="#777" opacity=".45"/><rect x="82" y="8" width="3" height="3" fill="#777" opacity=".45"/><rect x="88" y="8" width="3" height="3" fill="#777" opacity=".45"/><rect x="94" y="8" width="3" height="3" fill="#777" opacity=".45"/><rect x="100" y="8" width="3" height="3" fill="#777" opacity=".45"/><rect x="106" y="8" width="3" height="3" fill="#777" opacity=".45"/><rect x="112" y="8" width="3" height="3" fill="#777" opacity=".45"/><rect x="118" y="8" width="3" height="3" fill="#777" opacity=".45"/><rect x="20.0" y="15" width="2.5" height="3" fill="#777" opacity=".45"/><rect x="25.5" y="15" width="2.5" height="3" fill="#777" opacity=".45"/><rect x="31.0" y="15" width="2.5" height="3" fill="#777" opacity=".45"/><rect x="36.5" y="15" width="2.5" height="3" fill="#777" opacity=".45"/><rect x="42.0" y="15" width="2.5" height="3" fill="#777" opacity=".45"/><rect x="47.5" y="15" width="2.5" height="3" fill="#777" opacity=".45"/><rect x="53.0" y="15" width="2.5" height="3" fill="#777" opacity=".45"/><rect x="58.5" y="15" width="2.5" height="3" fill="#777" opacity=".45"/><rect x="64.0" y="15" width="2.5" height="3" fill="#777" opacity=".45"/><rect x="69.5" y="15" width="2.5" height="3" fill="#777" opacity=".45"/><rect x="75.0" y="15" width="2.5" height="3" fill="#777" opacity=".45"/><rect x="80.5" y="15" width="2.5" height="3" fill="#777" opacity=".45"/><rect x="86.0" y="15" width="2.5" height="3" fill="#777" opacity=".45"/><rect x="91.5" y="15" width="2.5" height="3" fill="#777" opacity=".45"/><rect x="97.0" y="15" width="2.5" height="3" fill="#777" opacity=".45"/><rect x="102.5" y="15" width="2.5" height="3" fill="#777" opacity=".45"/><rect x="108.0" y="15" width="2.5" height="3" fill="#777" opacity=".45"/><rect x="113.5" y="15" width="2.5" height="3" fill="#777" opacity=".45"/><rect x="8" y="13" width="6" height="6" fill="none" stroke="#c678dd" stroke-width="1"/><rect x="0" y="21" width="124" height=".6" fill="#ddd"/><rect x="80" y="21" width="3" height="104" fill="#cfcfcf"/><path d="M43 47h7v4.5c0 2.5-1.8 4.2-3.5 5-1.7-.8-3.5-2.5-3.5-5z" fill="#c8102e"/><rect x="52" y="48.5" width="24" height="2.2" fill="#333" opacity=".85"/><rect x="52" y="52.5" width="16" height="1" fill="#c8102e" opacity=".6"/></svg></div>
<div class="a card" style="left:897.1px;top:904px;width:124.5px;height:124.5px;background:#fff;border-color:#d6d6d6;"><svg style="left:0;top:0" width="124.5" height="124.5" viewBox="0 0 124 124"><rect width="124" height="124" fill="#fff"/><rect width="124" height="6" fill="#f3f3f3"/><rect x="0" y="6" width="124" height="5" fill="#fafafa"/><rect x="2" y="2" width="6" height="2" fill="#888" opacity=".5"/><rect x="14" y="2" width="14" height="2" fill="#888" opacity=".5"/><rect x="50" y="1" width="20" height="1" fill="#888" opacity=".4"/><rect x="110" y="2" width="12" height="2" fill="#555" opacity=".5"/><rect x="4" y="8" width="3" height="3" fill="#777" opacity=".45"/><rect x="10" y="8" width="3" height="3" fill="#777" opacity=".45"/><rect x="16" y="8" width="3" height="3" fill="#777" opacity=".45"/><rect x="22" y="8" width="3" height="3" fill="#777" opacity=".45"/><rect x="28" y="8" width="3" height="3" fill="#777" opacity=".45"/><rect x="34" y="8" width="3" height="3" fill="#777" opacity=".45"/><rect x="40" y="8" width="3" height="3" fill="#777" opacity=".45"/><rect x="46" y="8" width="3" height="3" fill="#777" opacity=".45"/><rect x="52" y="8" width="3" height="3" fill="#777" opacity=".45"/><rect x="58" y="8" width="3" height="3" fill="#777" opacity=".45"/><rect x="64" y="8" width="3" height="3" fill="#777" opacity=".45"/><rect x="70" y="8" width="3" height="3" fill="#777" opacity=".45"/><rect x="76" y="8" width="3" height="3" fill="#777" opacity=".45"/><rect x="82" y="8" width="3" height="3" fill="#777" opacity=".45"/><rect x="88" y="8" width="3" height="3" fill="#777" opacity=".45"/><rect x="94" y="8" width="3" height="3" fill="#777" opacity=".45"/><rect x="100" y="8" width="3" height="3" fill="#777" opacity=".45"/><rect x="106" y="8" width="3" height="3" fill="#777" opacity=".45"/><rect x="112" y="8" width="3" height="3" fill="#777" opacity=".45"/><rect x="118" y="8" width="3" height="3" fill="#777" opacity=".45"/><rect x="20.0" y="15" width="2.5" height="3" fill="#777" opacity=".45"/><rect x="25.5" y="15" width="2.5" height="3" fill="#777" opacity=".45"/><rect x="31.0" y="15" width="2.5" height="3" fill="#777" opacity=".45"/><rect x="36.5" y="15" width="2.5" height="3" fill="#777" opacity=".45"/><rect x="42.0" y="15" width="2.5" height="3" fill="#777" opacity=".45"/><rect x="47.5" y="15" width="2.5" height="3" fill="#777" opacity=".45"/><rect x="53.0" y="15" width="2.5" height="3" fill="#777" opacity=".45"/><rect x="58.5" y="15" width="2.5" height="3" fill="#777" opacity=".45"/><rect x="64.0" y="15" width="2.5" height="3" fill="#777" opacity=".45"/><rect x="69.5" y="15" width="2.5" height="3" fill="#777" opacity=".45"/><rect x="75.0" y="15" width="2.5" height="3" fill="#777" opacity=".45"/><rect x="80.5" y="15" width="2.5" height="3" fill="#777" opacity=".45"/><rect x="86.0" y="15" width="2.5" height="3" fill="#777" opacity=".45"/><rect x="91.5" y="15" width="2.5" height="3" fill="#777" opacity=".45"/><rect x="97.0" y="15" width="2.5" height="3" fill="#777" opacity=".45"/><rect x="102.5" y="15" width="2.5" height="3" fill="#777" opacity=".45"/><rect x="108.0" y="15" width="2.5" height="3" fill="#777" opacity=".45"/><rect x="113.5" y="15" width="2.5" height="3" fill="#777" opacity=".45"/><rect x="0" y="21" width="124" height=".6" fill="#ddd"/><rect x="80" y="21" width="3" height="104" fill="#cfcfcf"/><rect x="83" y="21" width="41" height="104" fill="#fafafa"/><circle cx="88" cy="36" r="1.5" fill="#c0392b" opacity=".7"/><rect x="91" y="35" width="14" height="1.5" fill="#777" opacity=".6"/><circle cx="88" cy="44" r="1.5" fill="#c0392b" opacity=".7"/><rect x="91" y="43" width="14" height="1.5" fill="#777" opacity=".6"/><circle cx="88" cy="52" r="1.5" fill="#c0392b" opacity=".7"/><rect x="91" y="51" width="14" height="1.5" fill="#777" opacity=".6"/><circle cx="88" cy="60" r="1.5" fill="#c0392b" opacity=".7"/><rect x="91" y="59" width="14" height="1.5" fill="#777" opacity=".6"/><circle cx="88" cy="68" r="1.5" fill="#c0392b" opacity=".7"/><rect x="91" y="67" width="14" height="1.5" fill="#777" opacity=".6"/><circle cx="88" cy="76" r="1.5" fill="#c0392b" opacity=".7"/><rect x="91" y="75" width="14" height="1.5" fill="#777" opacity=".6"/><circle cx="88" cy="84" r="1.5" fill="#c0392b" opacity=".7"/><rect x="91" y="83" width="14" height="1.5" fill="#777" opacity=".6"/><path d="M43 47h7v4.5c0 2.5-1.8 4.2-3.5 5-1.7-.8-3.5-2.5-3.5-5z" fill="#c8102e"/><rect x="52" y="48.5" width="24" height="2.2" fill="#333" opacity=".85"/><rect x="52" y="52.5" width="16" height="1" fill="#c8102e" opacity=".6"/></svg></div>
<div class="a card" style="left:1038.2px;top:904px;width:124.5px;height:124.5px;background:#fff;border-color:#e0e0e0;"><svg style="left:0;top:0" width="124.5" height="124.5" viewBox="0 0 124 124"><defs><filter id="bl2"><feGaussianBlur stdDeviation="1"/></filter></defs><rect width="124" height="124" fill="#d9d6d4"/><g filter="url(#bl2)"><rect x="60" y="0" width="64" height="30" fill="#e4e2e0"/><ellipse cx="30" cy="4" rx="9" ry="8" fill="#1e1a18"/><ellipse cx="48" cy="5" rx="9" ry="8" fill="#2a2220"/><ellipse cx="52" cy="9" rx="6" ry="6" fill="#d8a898"/><ellipse cx="68" cy="6" rx="9" ry="9" fill="#3a2a22"/><ellipse cx="66" cy="11" rx="5" ry="6" fill="#d8a890"/><ellipse cx="96" cy="3" rx="10" ry="6" fill="#2a2a2e"/><path d="M80 30C84 18 90 10 98 10L96 30Z" fill="#2a2420"/><ellipse cx="9" cy="4" rx="11" ry="6" fill="#6a4a30"/><ellipse cx="10" cy="12" rx="9" ry="10" fill="#c08060"/><path d="M2 16C6 20 14 20 17 16L18 22H2Z" fill="#8a5a3a"/><path d="M0 20H19V46L12 60H0Z" fill="#2a72d0"/><path d="M0 46H16V60H0Z" fill="#3a3a3e"/><path d="M23 46C22 30 28 14 40 8L50 14L40 46Z" fill="#c86878"/><ellipse cx="46" cy="24" rx="18" ry="16" fill="#e6b078"/><ellipse cx="52" cy="32" rx="9" ry="9" fill="#e8bca8"/><path d="M8 60C10 44 20 35 32 35C42 36 50 44 51 60Z" fill="#efc4ac"/><path d="M28 60C28 50 31 45 35 45C39 45 41 50 41 60Z" fill="#8a1e2c"/><path d="M43 45H62V62H43Z" fill="#f0f0f0"/><ellipse cx="96" cy="17" rx="17" ry="12" fill="#2e2220"/><ellipse cx="100" cy="30" rx="11" ry="9" fill="#e2b4a4"/><path d="M58 62C60 40 72 22 92 22C104 26 111 40 112 62Z" fill="#1c1c20"/><ellipse cx="118" cy="22" rx="8" ry="14" fill="#3a2018"/><path d="M111 32L124 30V56L112 56Z" fill="#b02828"/><rect x="78" y="48" width="13" height="14" rx="3" fill="#2a9a98"/><ellipse cx="100" cy="54" rx="6" ry="4" fill="#d0d8e0"/><rect x="104" y="52" width="20" height="10" fill="#e8e4dc"/></g></svg></div>
<div class="a" id="scroll"></div>
<div class="a" id="thumb"></div>
</body></html>
